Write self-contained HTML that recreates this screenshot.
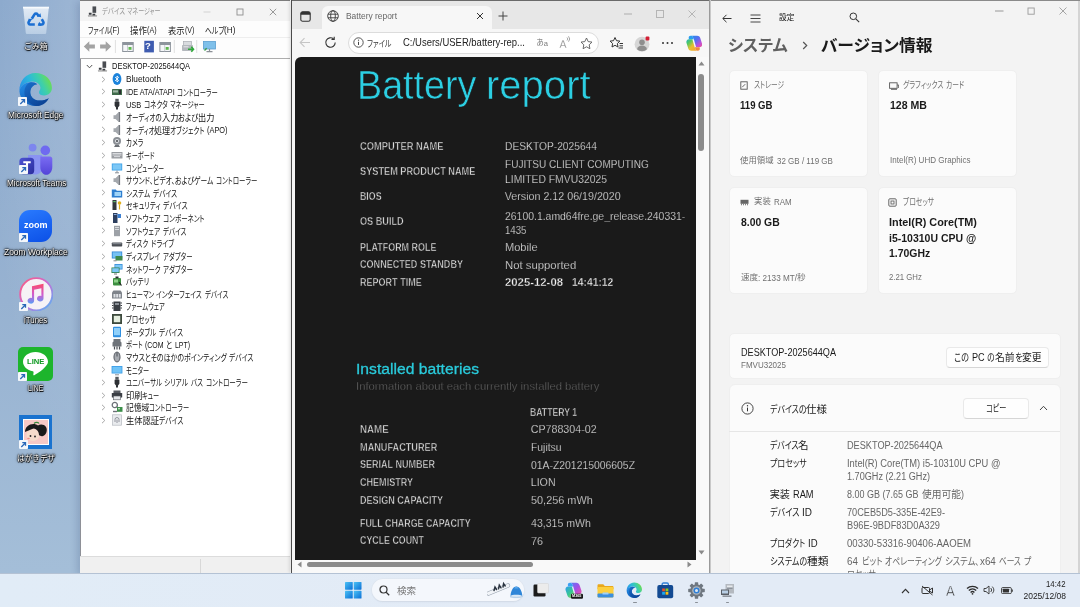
<!DOCTYPE html>
<html lang="ja">
<head>
<meta charset="utf-8">
<title>Desktop</title>
<style>
*{box-sizing:border-box;margin:0;padding:0}
html,body{width:1080px;height:607px;overflow:hidden;background:#9ab3d2}
body{font-family:"Liberation Sans","Noto Sans CJK JP",sans-serif;position:relative}
#desk{position:absolute;left:0;top:0;width:1080px;height:607px;overflow:hidden;will-change:transform;
 background:radial-gradient(ellipse 100px 480px at 85px 0,rgba(255,255,255,.17),rgba(255,255,255,0)),linear-gradient(180deg,#8aa8cc 0,#97b2d1 300px,#a4bed8 570px,#a4bed8 100%)}
.t{position:absolute;white-space:nowrap;display:block}
.a{position:absolute;display:block}
i.a{font-style:normal}

.dl{text-shadow:.6px .8px .7px #000,0 0 1px #000,0 0 1.500px #000,0 0 2.500px #000,0 0 3.500px rgba(0,0,0,.6)}

#dm{position:absolute;left:80px;top:0;width:211px;height:573px;background:#fff;box-shadow:inset 1px 0 0 #8e9097,-3px 2px 7px rgba(20,40,80,.16)}
#dm .dmtitle{position:absolute;left:0;top:0;width:210px;height:20.500px;background:#f4f4f4;box-shadow:inset 0 1px 0 #7c7c7c}
#dm .dmmenu{position:absolute;left:0;top:20.500px;width:210px;height:17px;background:#fdfdfd}
#dm .dmtool{position:absolute;left:0;top:37px;width:210px;height:22px;background:#fdfdfd;border-top:1px solid #eeeeee;border-bottom:1.500px solid #adadad}
#dm .dmtree{position:absolute;left:0;top:0;width:210px;height:560px}
#dm .dmstatus{position:absolute;left:0;top:555.500px;width:210px;height:18px;background:#f0f0f0;border-top:1px solid #dcdcdc}
#dm .dmstatus i{position:absolute;left:120px;top:2px;width:1px;height:14px;background:#d8d8d8}

#edge{position:absolute;left:291px;top:0;width:419px;height:573px;background:#f7f7f7;box-shadow:-1px 0 4px rgba(0,0,0,.16)}
#edge .eborder{position:absolute;left:0;top:0;width:419px;height:573px;box-shadow:inset 1px 0 0 #4c4c4c,inset -1px 0 0 #9a9a9a,inset 0 1px 0 #6a6a6a;pointer-events:none}
#edge .etabs{position:absolute;left:0;top:0;width:419px;height:29px;background:#e7e7e7}
#edge .etab{position:absolute;left:30.600px;top:5.500px;width:170px;height:23.500px;background:#f7f7f7;border-radius:6px 6px 0 0}
#edge .ebar{position:absolute;left:0;top:28.500px;width:419px;height:28.500px;background:#f7f7f7}
#edge .epill{position:absolute;left:57px;top:3.500px;width:250.500px;height:21.500px;border-radius:11px;background:#fff;border:1px solid #dcdcdc}
#edge .epage{position:absolute;left:4px;top:57px;width:401px;height:503px;background:#1a1a1a;border-radius:6px 0 0 0;overflow:hidden}
#edge .evs{position:absolute;left:405px;top:57px;width:13px;height:503px;background:#f9f9f9}
#edge .ehs{position:absolute;left:4px;top:560px;width:414px;height:13px;background:#f9f9f9}

#set{position:absolute;left:710px;top:0;width:370px;height:573px;background:#f3f3f3;overflow:hidden}
#set .sborder{position:absolute;left:0;top:0;width:370px;height:573px;box-shadow:inset 1px 0 0 #c9c9c9,inset 0 1px 0 #8a8a8a,inset -2px 0 0 #d4d4d4;pointer-events:none}
#set .card{position:absolute;background:#fbfbfb;border:1px solid #efefef;border-radius:5px}
#set .btn{position:absolute;background:#fefefe;border:1px solid #e9e9e9;border-bottom-color:#d6d6d6;border-radius:4px}

#tb{position:absolute;left:0;top:573px;width:1080px;height:34px;background:linear-gradient(90deg,#e1ecf7,#e3ebf6 50%,#e3ebf6);box-shadow:inset 0 1px 0 #b4c2d4}
#tb .pill{position:absolute;left:371.600px;top:5.700px;width:152.800px;height:22.800px;border-radius:11.400px;background:#f4f7fc;box-shadow:0 0 0 .6px #dfe5ee,0 .8px 1.200px rgba(120,135,160,.35)}
</style>
</head>
<body>
<div id="desk">
<svg class="a" style="left:21.500px;top:5.800px" width="28" height="29" viewBox="0 0 28 29"><defs><linearGradient id="rb" x1="0" y1="0" x2="0" y2="1"><stop offset="0" stop-color="#e9f0f8"/><stop offset=".5" stop-color="#d3e1f0"/><stop offset="1" stop-color="#bcd0e6"/></linearGradient></defs><path d="M1.200 1.500h25.600l-2.600 25.500c-.1.600-.5 1-1.100 1H4.900c-.6 0-1-.4-1.100-1z" fill="url(#rb)" opacity=".92"/><path d="M1 1.600h26" stroke="#f7fafd" stroke-width="1.800"/><g fill="none" stroke="#1b6fd2" stroke-width="2.600" stroke-linejoin="round"><path d="M9.800 12.800l2.700-4.400c.7-1.100 2.300-1.100 3 0l1.200 2"/><path d="M19.800 13.200l1.500 2.600c.7 1.200-.2 2.700-1.600 2.700h-3.200"/><path d="M12.800 18.500H8.300c-1.400 0-2.300-1.500-1.600-2.700l1-1.700"/></g><g fill="#1b6fd2"><path d="M15.200 10.600l4 .6-.8-4z"/><path d="M17.300 15.800l-1.600 3.700 3.900.5z"/><path d="M10.300 13l-4-.3 1.200 3.800z"/></g></svg>
<span class="t dl" id="t1" style="top:38.80px;font-size:8.4px;line-height:14px;color:#fff;left:23.95px;transform:scaleX(0.9353);transform-origin:0 50%">ごみ箱</span>
<svg class="a" style="left:18.4px;top:71.7px" width="35.0" height="35.0" viewBox="0 0 32 32"><defs><linearGradient id="eadk" x1="0" y1=".7" x2="1" y2=".35"><stop offset="0" stop-color="#2a8ee8"/><stop offset=".4" stop-color="#2cb8dc"/><stop offset=".7" stop-color="#3fd0a8"/><stop offset="1" stop-color="#72de48"/></linearGradient><linearGradient id="ebdk" x1="0" y1="0" x2=".6" y2="1"><stop offset="0" stop-color="#2590e8"/><stop offset="1" stop-color="#0f58b4"/></linearGradient><linearGradient id="ecdk" x1="0" y1="0" x2=".8" y2="1"><stop offset="0" stop-color="#1a6cc8"/><stop offset="1" stop-color="#0a3f90"/></linearGradient></defs><path d="M1.300 17.500C.8 8.500 7.500 1 16 1c8.500 0 15 6 15 13.500 0 4.200-3 7-7 7-2.800 0-4.800-1.200-4.800-2.800 0-1.500 1.300-2 1.300-4.200 0-3-3-5.800-7.200-5.800C7.800 8.700 2.500 12 1.300 17.500z" fill="url(#eadk)"/><path d="M1.300 17.500C2.200 12 7 9.300 12 9.300c2.500 0 4.500.8 5.500 1.900-3.500.3-6.300 3.300-6.300 7.300 0 4.300 3.600 7.600 8.600 7.600 3.200 0 6-.9 8.300-2.200C25.800 28 21.200 31 16 31 8 31 1.800 25 1.300 17.500z" fill="url(#ebdk)"/><path d="M9.800 10c-2.600 2-4 5-4 8.300 0 6 4.200 11.500 10.700 12.700 5 .2 9.500-2.700 11.600-7.100-2.300 1.300-5.100 2.200-8.300 2.200-5 0-8.600-3.300-8.600-7.600 0-4 2.800-7 6.300-7.300-1-1.100-3-1.900-5.500-1.900-.8 0-1.500.2-2.200.7z" fill="url(#ecdk)" opacity=".92"/></svg>
<svg class="a" style="left:18.2px;top:97.3px" width="9" height="9" viewBox="0 0 9 9"><rect width="9" height="9" rx=".8" fill="#f4f7fb"/><path d="M2.300 7l3.700-3.700M3.300 2.600h3.200v3.200" fill="none" stroke="#2a68b8" stroke-width="1.300"/></svg>
<span class="t dl" id="t2" style="top:107.50px;font-size:8.4px;line-height:14px;color:#fff;left:8.10px;transform:scaleX(0.9918);transform-origin:0 50%">Microsoft Edge</span>
<svg class="a" style="left:18.500px;top:142.500px" width="34" height="32" viewBox="0 0 34 32"><defs><linearGradient id="tm" x1="0" y1="0" x2="0" y2="1"><stop offset="0" stop-color="#7a6cf2"/><stop offset="1" stop-color="#5344d8"/></linearGradient><linearGradient id="tm2" x1="0" y1="0" x2="1" y2="1"><stop offset="0" stop-color="#4c54d4"/><stop offset="1" stop-color="#2a2c9c"/></linearGradient></defs><circle cx="13.600" cy="4.600" r="3.900" fill="#7d86ee"/><circle cx="26.300" cy="7.400" r="4.800" fill="#6f6af0"/><path d="M9 12h14v13c0 3.800-3 6.600-7 6.600S9 28.800 9 25z" fill="#8a93f2"/><path d="M21.300 13.500h9.700c1.300 0 2.300 1 2.300 2.300v8.200c0 4.400-2.700 7.800-6 7.800s-6-3.400-6-7.800z" fill="url(#tm)"/><rect x=".4" y="14.800" width="14.800" height="16.400" rx="3.600" fill="url(#tm2)"/><path d="M4.300 19.300h7.400M8 19.300v8.400" stroke="#fff" stroke-width="2.100"/></svg>
<svg class="a" style="left:18.8px;top:165.3px" width="9" height="9" viewBox="0 0 9 9"><rect width="9" height="9" rx=".8" fill="#f4f7fb"/><path d="M2.300 7l3.700-3.700M3.300 2.600h3.200v3.200" fill="none" stroke="#2a68b8" stroke-width="1.300"/></svg>
<span class="t dl" id="t3" style="top:175.50px;font-size:8.4px;line-height:14px;color:#fff;left:6.95px;transform:scaleX(0.9751);transform-origin:0 50%">Microsoft Teams</span>
<div class="a" style="left:18.800px;top:210.200px;width:33.600px;height:32.100px;border-radius:11px;background:linear-gradient(160deg,#2a7bff,#0b4fe6)"></div>
<span class="t" id="t4" style="top:217.60px;font-size:9.6px;line-height:14px;color:#fff;font-weight:bold;left:23.70px;transform:scaleX(0.9416);transform-origin:0 50%">zoom</span>
<svg class="a" style="left:18.8px;top:233.3px" width="9" height="9" viewBox="0 0 9 9"><rect width="9" height="9" rx=".8" fill="#f4f7fb"/><path d="M2.300 7l3.700-3.700M3.300 2.600h3.200v3.200" fill="none" stroke="#2a68b8" stroke-width="1.300"/></svg>
<span class="t dl" id="t5" style="top:245.00px;font-size:8.4px;line-height:14px;color:#fff;left:4.35px;transform:scaleX(1.0086);transform-origin:0 50%">Zoom Workplace</span>
<svg class="a" style="left:18.500px;top:276.800px" width="34.600" height="34.600" viewBox="0 0 36 36"><defs><linearGradient id="it" x1="0" y1="0" x2="1" y2="1"><stop offset="0" stop-color="#ff5a7a"/><stop offset=".5" stop-color="#c86dd7"/><stop offset="1" stop-color="#4fb8f5"/></linearGradient><linearGradient id="it2" x1="0" y1="0" x2="0" y2="1"><stop offset="0" stop-color="#fb4a6a"/><stop offset=".55" stop-color="#d05ccf"/><stop offset="1" stop-color="#5a9cf5"/></linearGradient></defs><circle cx="18" cy="18" r="16.800" fill="#f6f2f6" stroke="url(#it)" stroke-width="2"/><path d="M13.500 9.500l12-2.600v15.600a3.400 3 0 11-2.200-2.800V11.600l-7.600 1.700v11.400a3.400 3 0 11-2.200-2.800z" fill="url(#it2)"/></svg>
<svg class="a" style="left:18.9px;top:302.0px" width="9" height="9" viewBox="0 0 9 9"><rect width="9" height="9" rx=".8" fill="#f4f7fb"/><path d="M2.300 7l3.700-3.700M3.300 2.600h3.200v3.200" fill="none" stroke="#2a68b8" stroke-width="1.300"/></svg>
<span class="t dl" id="t6" style="top:312.50px;font-size:8.4px;line-height:14px;color:#fff;left:24.05px;transform:scaleX(0.9385);transform-origin:0 50%">iTunes</span>
<div class="a" style="left:18.400px;top:346.800px;width:34.500px;height:33.800px;border-radius:5px;background:#1db52c"></div>
<svg class="a" style="left:22px;top:351px" width="27" height="26" viewBox="0 0 27 26"><path d="M13.500 1C6.600 1 1 5.300 1 10.800c0 4.700 4.200 8.600 9.800 9.500.9.200.8.900.7 1.700l-.2 1.700c0 .5.300.9 1 .5 1.500-.8 7.500-4.400 10.300-7.700 2-2 3.400-3.700 3.400-5.700C26 5.300 20.400 1 13.500 1z" fill="#fff"/></svg>
<span class="t" id="t7" style="top:354.80px;font-size:7.2px;line-height:14px;color:#0f9a22;font-weight:bold;left:27.00px;transform:scaleX(1.0626);transform-origin:0 50%">LINE</span>
<svg class="a" style="left:18.4px;top:371.6px" width="9" height="9" viewBox="0 0 9 9"><rect width="9" height="9" rx=".8" fill="#f4f7fb"/><path d="M2.300 7l3.700-3.700M3.300 2.600h3.200v3.200" fill="none" stroke="#2a68b8" stroke-width="1.300"/></svg>
<span class="t dl" id="t8" style="top:381.00px;font-size:8.4px;line-height:14px;color:#fff;left:27.75px;transform:scaleX(0.8322);transform-origin:0 50%">LINE</span>
<div class="a" style="left:18.800px;top:414.900px;width:33.500px;height:34.100px;background:#1a73cf"></div>
<div class="a" style="left:22.500px;top:418.500px;width:26px;height:26.500px;background:#fff"></div>
<svg class="a" style="left:23.500px;top:420px" width="24" height="24" viewBox="0 0 24 24"><rect width="24" height="24" fill="#f7c9c6"/><ellipse cx="9" cy="15" rx="6.500" ry="6" fill="#f6dccb"/><path d="M1 12c0-5 4-8 8.500-8 2 0 3 .5 4.500 1.500 2-1.500 6-1.500 8 1.500 2 3.500 0 8-3 9-1.500.5-3 0-4-1 0-3-2-6-5.500-6.500C6 10 3 11 1 12z" fill="#1a1a1a"/><circle cx="6.500" cy="16" r=".9" fill="#222"/><circle cx="11" cy="16.500" r=".9" fill="#222"/><ellipse cx="4.500" cy="18.500" rx="1.300" ry=".8" fill="#f08a8a"/><path d="M10 3.500c1.500-1.500 4-1.500 5 0" stroke="#3a8a3a" stroke-width="1.200" fill="none"/></svg>
<svg class="a" style="left:18.8px;top:440.0px" width="9" height="9" viewBox="0 0 9 9"><rect width="9" height="9" rx=".8" fill="#f4f7fb"/><path d="M2.300 7l3.700-3.700M3.300 2.600h3.200v3.200" fill="none" stroke="#2a68b8" stroke-width="1.300"/></svg>
<span class="t dl" id="t9" style="top:450.70px;font-size:8.4px;line-height:14px;color:#fff;left:16.50px;transform:scaleX(0.9122);transform-origin:0 50%">はがきデザ</span>
<div id="dm">
<div class="dmtitle">
<svg class="a" style="left:7.0px;top:5.00px" width="11" height="12" viewBox="0 0 12 12"><path d="M6 1h4v7H6z" fill="#4a4d52"/><path d="M2 8h3v2H2zM6 9h3v2H6z" fill="#3a3d42"/><path d="M1 11h10v.8H1z" fill="#555"/></svg>
<span class="t" id="t10" style="top:4.60px;font-size:8px;line-height:14px;color:#959595;left:21.90px;transform:scaleX(0.7911);transform-origin:0 50%;font-feature-settings:'palt'">デバイス</span><span class="t" id="t11" style="top:4.60px;font-size:8px;line-height:14px;color:#959595;left:47.43px;transform:scaleX(0.7538);transform-origin:0 50%;font-feature-settings:'palt'">マネージャー</span>
<svg class="a" style="left:122px;top:6.500px" width="10" height="10" viewBox="0 0 10 10"><path d="M1.500 5h7" stroke="#d2d2d2" stroke-width="1"/></svg>
<svg class="a" style="left:155px;top:6.500px" width="10" height="10" viewBox="0 0 10 10"><rect x="2" y="2" width="6" height="6" fill="none" stroke="#8e8e8e" stroke-width=".9"/></svg>
<svg class="a" style="left:188.400px;top:6.500px" width="10" height="10" viewBox="0 0 10 10"><path d="M1.800 1.800l6.400 6.400M8.200 1.800l-6.400 6.400" stroke="#8e8e8e" stroke-width=".9"/></svg>
</div>
<div class="dmmenu">
<span class="t" id="t12" style="top:3.60px;font-size:9px;line-height:14px;color:#1a1a1a;left:7.50px;transform:scaleX(0.7243);transform-origin:0 50%;font-feature-settings:'palt'">ファイル</span><span class="t" id="t13" style="top:2.80px;font-size:8.5px;line-height:14px;color:#1a1a1a;left:30.08px;transform:scaleX(0.8678);transform-origin:0 50%">(F)</span>
<span class="t" id="t14" style="top:3.60px;font-size:9px;line-height:14px;color:#1a1a1a;left:50.00px;transform:scaleX(0.9390);transform-origin:0 50%;font-feature-settings:'palt'">操作</span><span class="t" id="t15" style="top:2.80px;font-size:8.5px;line-height:14px;color:#1a1a1a;left:66.92px;transform:scaleX(0.8448);transform-origin:0 50%">(A)</span>
<span class="t" id="t16" style="top:3.60px;font-size:9px;line-height:14px;color:#1a1a1a;left:88.00px;transform:scaleX(0.9213);transform-origin:0 50%;font-feature-settings:'palt'">表示</span><span class="t" id="t17" style="top:2.80px;font-size:8.5px;line-height:14px;color:#1a1a1a;left:104.60px;transform:scaleX(0.8289);transform-origin:0 50%">(V)</span>
<span class="t" id="t18" style="top:3.60px;font-size:9px;line-height:14px;color:#1a1a1a;left:124.50px;transform:scaleX(0.7604);transform-origin:0 50%;font-feature-settings:'palt'">ヘルプ</span><span class="t" id="t19" style="top:2.80px;font-size:8.5px;line-height:14px;color:#1a1a1a;left:144.14px;transform:scaleX(0.9617);transform-origin:0 50%">(H)</span>
</div>
<div class="dmtool">
<svg class="a" style="left:2px;top:1.900px" width="200" height="13" viewBox="0 0 200 13"><path d="M1.800 6.500l5.500-5.200v3.200h5.600v4h-5.600v3.200z" fill="#a3a3a3"/><path d="M29.200 6.500l-5.500-5.200v3.200h-5.600v4h5.600v3.200z" fill="#a3a3a3"/><path d="M33.400 0v13" stroke="#e0e0e0" stroke-width="1"/><rect x="40.700" y="2.500" width="10.500" height="9" fill="#f4f6f8" stroke="#8d949c" stroke-width="1"/><rect x="40.700" y="2.500" width="10.500" height="2.500" fill="#8d949c"/><path d="M45.500 5v6.500" stroke="#b4b9bf" stroke-width=".7"/><rect x="46.500" y="7" width="3" height="2.800" fill="#5fb84e"/><rect x="62.300" y=".8" width="9.600" height="11.600" fill="#3f5cb0"/><rect x="77.900" y="2.500" width="10.500" height="9" fill="#f4f6f8" stroke="#8d949c" stroke-width="1"/><rect x="77.900" y="2.500" width="10.500" height="2.500" fill="#8d949c"/><path d="M82.700 5v6.500" stroke="#b4b9bf" stroke-width=".7"/><rect x="83.700" y="7" width="3" height="2.800" fill="#5fb84e"/><path d="M92.300 0v13" stroke="#e0e0e0" stroke-width="1"/><rect x="101.500" y="1.500" width="8" height="5" fill="#d9dcdf" stroke="#a9adb2" stroke-width=".7"/><rect x="100" y="5" width="11" height="6" rx=".8" fill="#b4b8bd"/><rect x="101.500" y="6.300" width="5" height="1" fill="#e6e8ea"/><path d="M106 9.300h5.300M109.300 6.800l2.200 2.500-2.200 2.500" stroke="#2fa83a" stroke-width="1.600" fill="none"/><path d="M114.700 0v13" stroke="#e0e0e0" stroke-width="1"/><rect x="121.500" y="1.500" width="12" height="7.500" fill="#7fc0ea" stroke="#5d9fd0" stroke-width=".8"/><path d="M124.500 11.700h6M127.500 9v2.700" stroke="#8b9096" stroke-width="1.200"/><path d="M122.500 10.500l2.200-2.200" stroke="#3c9e4a" stroke-width="1.400"/></svg>
<span class="t" id="t20" style="top:1.40px;font-size:9.5px;line-height:14px;color:#fff;font-weight:bold;left:64.90px">?</span>
</div>
<div class="dmtree">
<svg class="a" style="left:5.5px;top:64.40px" width="7" height="5" viewBox="0 0 7 5"><path d="M.8 1L3.500 3.800 6.200 1" fill="none" stroke="#555" stroke-width="1"/></svg>
<svg class="a" style="left:17.0px;top:59.80px" width="11" height="12" viewBox="0 0 12 12"><path d="M6 1h4v7H6z" fill="#4a4d52"/><path d="M2 8h3v2H2zM6 9h3v2H6z" fill="#3a3d42"/><path d="M1 11h10v.8H1z" fill="#555"/></svg>
<span class="t" id="t21" style="top:59.30px;font-size:8.6px;line-height:14px;color:#111;left:32.20px;transform:scaleX(0.8700);transform-origin:0 50%">DESKTOP-2025644QA</span>
<svg class="a" style="left:21.0px;top:75.80px" width="5" height="7" viewBox="0 0 5 7"><path d="M1 .8L3.800 3.500 1 6.200" fill="none" stroke="#a6a6a6" stroke-width="1"/></svg>
<svg class="a" style="left:30.6px;top:73.10px" width="12" height="12" viewBox="0 0 12 12"><ellipse cx="6" cy="6" rx="4.400" ry="5.900" fill="#1c83dc"/><path d="M4.2 4l3.4 3.6L6 9V3l1.6 1.4L4.2 8" stroke="#fff" stroke-width=".9" fill="none"/></svg>
<span class="t" id="t22" style="top:72.40px;font-size:8.5px;line-height:14px;color:#111;left:45.80px;transform:scaleX(0.9743);transform-origin:0 50%">Bluetooth</span>
<svg class="a" style="left:21.0px;top:88.43px" width="5" height="7" viewBox="0 0 5 7"><path d="M1 .8L3.800 3.500 1 6.200" fill="none" stroke="#a6a6a6" stroke-width="1"/></svg>
<svg class="a" style="left:30.6px;top:85.73px" width="12" height="12" viewBox="0 0 12 12"><rect x="1" y="3" width="10" height="6" rx=".6" fill="#3f6a4a"/><rect x="2" y="4.3" width="5" height="2.2" fill="#9fb6a4"/><rect x="8" y="4" width="2" height="4" fill="#2a2d2f"/></svg>
<span class="t" id="t23" style="top:85.03px;font-size:8.5px;line-height:14px;color:#111;left:45.80px;transform:scaleX(0.8550);transform-origin:0 50%">IDE ATA/ATAPI</span><span class="t" id="t24" style="top:85.73px;font-size:9px;line-height:14px;color:#111;left:97.10px;transform:scaleX(0.7046);transform-origin:0 50%;font-feature-settings:'palt'">コントローラー</span>
<svg class="a" style="left:21.0px;top:101.06px" width="5" height="7" viewBox="0 0 5 7"><path d="M1 .8L3.800 3.500 1 6.200" fill="none" stroke="#a6a6a6" stroke-width="1"/></svg>
<svg class="a" style="left:30.6px;top:98.36px" width="12" height="12" viewBox="0 0 12 12"><path d="M4.3 .8h3.4v3H4.300z" fill="#55595e"/><path d="M3.6 3.8h4.8v4L7 9.6v2H5v-2L3.600 7.800z" fill="#2e3135"/></svg>
<span class="t" id="t25" style="top:97.66px;font-size:8.5px;line-height:14px;color:#111;left:45.80px;transform:scaleX(0.8748);transform-origin:0 50%">USB</span><span class="t" id="t26" style="top:98.36px;font-size:9px;line-height:14px;color:#111;left:63.72px;transform:scaleX(0.7261);transform-origin:0 50%;font-feature-settings:'palt'">コネクタ</span><span class="t" id="t27" style="top:98.36px;font-size:9px;line-height:14px;color:#111;left:90.15px;transform:scaleX(0.6937);transform-origin:0 50%;font-feature-settings:'palt'">マネージャー</span>
<svg class="a" style="left:21.0px;top:113.69px" width="5" height="7" viewBox="0 0 5 7"><path d="M1 .8L3.800 3.500 1 6.200" fill="none" stroke="#a6a6a6" stroke-width="1"/></svg>
<svg class="a" style="left:30.6px;top:110.99px" width="12" height="12" viewBox="0 0 12 12"><path d="M2.500 4.200h2L7.500 1.200v9.600L4.500 8h-2z" fill="#a4a8ad"/><rect x="7.500" y="1" width="1.600" height="10" fill="#74787e"/></svg>
<span class="t" id="t28" style="top:110.99px;font-size:9px;line-height:14px;color:#111;left:45.80px;transform:scaleX(0.7315);transform-origin:0 50%;font-feature-settings:'palt'">オーディオの</span><span class="t" id="t29" style="top:110.99px;font-size:9px;line-height:14px;color:#111;left:81.55px;transform:scaleX(0.9039);transform-origin:0 50%;font-feature-settings:'palt'">入力</span><span class="t" id="t30" style="top:110.99px;font-size:9px;line-height:14px;color:#111;left:97.84px;transform:scaleX(0.8011);transform-origin:0 50%;font-feature-settings:'palt'">および</span><span class="t" id="t31" style="top:110.99px;font-size:9px;line-height:14px;color:#111;left:118.02px;transform:scaleX(0.9039);transform-origin:0 50%;font-feature-settings:'palt'">出力</span>
<svg class="a" style="left:21.0px;top:126.32px" width="5" height="7" viewBox="0 0 5 7"><path d="M1 .8L3.800 3.500 1 6.200" fill="none" stroke="#a6a6a6" stroke-width="1"/></svg>
<svg class="a" style="left:30.6px;top:123.62px" width="12" height="12" viewBox="0 0 12 12"><path d="M2.500 4.200h2L7.500 1.200v9.600L4.500 8h-2z" fill="#a4a8ad"/><rect x="7.500" y="1" width="1.600" height="10" fill="#74787e"/></svg>
<span class="t" id="t32" style="top:123.62px;font-size:9px;line-height:14px;color:#111;left:45.80px;transform:scaleX(0.7090);transform-origin:0 50%;font-feature-settings:'palt'">オーディオ</span><span class="t" id="t33" style="top:123.62px;font-size:9px;line-height:14px;color:#111;left:74.29px;transform:scaleX(0.8873);transform-origin:0 50%;font-feature-settings:'palt'">処理</span><span class="t" id="t34" style="top:123.62px;font-size:9px;line-height:14px;color:#111;left:90.28px;transform:scaleX(0.7262);transform-origin:0 50%;font-feature-settings:'palt'">オブジェクト</span><span class="t" id="t35" style="top:122.92px;font-size:8.5px;line-height:14px;color:#111;left:127.29px;transform:scaleX(0.8682);transform-origin:0 50%">(APO)</span>
<svg class="a" style="left:21.0px;top:138.95px" width="5" height="7" viewBox="0 0 5 7"><path d="M1 .8L3.800 3.500 1 6.200" fill="none" stroke="#a6a6a6" stroke-width="1"/></svg>
<svg class="a" style="left:30.6px;top:136.25px" width="12" height="12" viewBox="0 0 12 12"><circle cx="6" cy="5" r="4" fill="#8b8f95"/><circle cx="6" cy="5" r="2" fill="#dfe2e6"/><circle cx="6" cy="5" r="1" fill="#44474c"/><path d="M3 11h6l-1.200-2H4.200z" fill="#6c7076"/></svg>
<span class="t" id="t36" style="top:136.25px;font-size:9px;line-height:14px;color:#111;left:45.80px;transform:scaleX(0.7208);transform-origin:0 50%;font-feature-settings:'palt'">カメラ</span>
<svg class="a" style="left:21.0px;top:151.58px" width="5" height="7" viewBox="0 0 5 7"><path d="M1 .8L3.800 3.500 1 6.200" fill="none" stroke="#a6a6a6" stroke-width="1"/></svg>
<svg class="a" style="left:30.6px;top:148.88px" width="12" height="12" viewBox="0 0 12 12"><rect x=".5" y="3" width="11" height="6.500" rx=".6" fill="#9a9da2"/><path d="M1.5 4.5h9M1.5 6h9M3 7.600h6" stroke="#e9eaec" stroke-width=".8"/></svg>
<span class="t" id="t37" style="top:148.88px;font-size:9px;line-height:14px;color:#111;left:45.80px;transform:scaleX(0.6836);transform-origin:0 50%;font-feature-settings:'palt'">キーボード</span>
<svg class="a" style="left:21.0px;top:164.21px" width="5" height="7" viewBox="0 0 5 7"><path d="M1 .8L3.800 3.500 1 6.200" fill="none" stroke="#a6a6a6" stroke-width="1"/></svg>
<svg class="a" style="left:30.6px;top:161.51px" width="12" height="12" viewBox="0 0 12 12"><rect x=".8" y="1.500" width="10.400" height="7" fill="#3aa0e8"/><rect x="1.600" y="2.300" width="8.800" height="5.400" fill="#7cc7f6"/><path d="M4 10.800h4M6 8.500v2.300" stroke="#8a9097" stroke-width="1"/></svg>
<span class="t" id="t38" style="top:161.51px;font-size:9px;line-height:14px;color:#111;left:45.80px;transform:scaleX(0.6538);transform-origin:0 50%;font-feature-settings:'palt'">コンピューター</span>
<svg class="a" style="left:21.0px;top:176.84px" width="5" height="7" viewBox="0 0 5 7"><path d="M1 .8L3.800 3.500 1 6.200" fill="none" stroke="#a6a6a6" stroke-width="1"/></svg>
<svg class="a" style="left:30.6px;top:174.14px" width="12" height="12" viewBox="0 0 12 12"><path d="M2.500 4.200h2L7.500 1.200v9.600L4.500 8h-2z" fill="#a4a8ad"/><rect x="7.500" y="1" width="1.600" height="10" fill="#74787e"/></svg>
<span class="t" id="t39" style="top:174.14px;font-size:9px;line-height:14px;color:#111;left:45.80px;transform:scaleX(0.7560);transform-origin:0 50%;font-feature-settings:'palt'">サウンド、ビデオ、およびゲーム</span><span class="t" id="t40" style="top:174.14px;font-size:9px;line-height:14px;color:#111;left:135.89px;transform:scaleX(0.7152);transform-origin:0 50%;font-feature-settings:'palt'">コントローラー</span>
<svg class="a" style="left:21.0px;top:189.47px" width="5" height="7" viewBox="0 0 5 7"><path d="M1 .8L3.800 3.500 1 6.200" fill="none" stroke="#a6a6a6" stroke-width="1"/></svg>
<svg class="a" style="left:30.6px;top:186.77px" width="12" height="12" viewBox="0 0 12 12"><path d="M.8 2.500h4l1 1.200h5.400v6.800H.8z" fill="#2f7fd0"/><rect x="3.500" y="5" width="6.500" height="4" fill="#9fd3f7"/></svg>
<span class="t" id="t41" style="top:186.77px;font-size:9px;line-height:14px;color:#111;left:45.80px;transform:scaleX(0.7347);transform-origin:0 50%;font-feature-settings:'palt'">システム</span><span class="t" id="t42" style="top:186.77px;font-size:9px;line-height:14px;color:#111;left:72.53px;transform:scaleX(0.7364);transform-origin:0 50%;font-feature-settings:'palt'">デバイス</span>
<svg class="a" style="left:21.0px;top:202.10px" width="5" height="7" viewBox="0 0 5 7"><path d="M1 .8L3.800 3.500 1 6.200" fill="none" stroke="#a6a6a6" stroke-width="1"/></svg>
<svg class="a" style="left:30.6px;top:199.40px" width="12" height="12" viewBox="0 0 12 12"><rect x="1.500" y="1" width="4" height="10" fill="#33373c"/><rect x="2.300" y="2" width="2.400" height="1.200" fill="#5fbf6a"/><circle cx="8.500" cy="4" r="1.800" fill="#e0b020"/><path d="M8.500 5.500v5" stroke="#e0b020" stroke-width="1.200"/></svg>
<span class="t" id="t43" style="top:199.40px;font-size:9px;line-height:14px;color:#111;left:45.80px;transform:scaleX(0.7454);transform-origin:0 50%;font-feature-settings:'palt'">セキュリティ</span><span class="t" id="t44" style="top:199.40px;font-size:9px;line-height:14px;color:#111;left:83.22px;transform:scaleX(0.7521);transform-origin:0 50%;font-feature-settings:'palt'">デバイス</span>
<svg class="a" style="left:21.0px;top:214.73px" width="5" height="7" viewBox="0 0 5 7"><path d="M1 .8L3.800 3.500 1 6.200" fill="none" stroke="#a6a6a6" stroke-width="1"/></svg>
<svg class="a" style="left:30.6px;top:212.03px" width="12" height="12" viewBox="0 0 12 12"><rect x="2" y="1" width="4.500" height="10" fill="#2d3e5e"/><rect x="6.500" y="2" width="3.500" height="4" fill="#3d7fd0"/><rect x="2.800" y="2" width="2.800" height="1" fill="#8fb0e0"/></svg>
<span class="t" id="t45" style="top:212.03px;font-size:9px;line-height:14px;color:#111;left:45.80px;transform:scaleX(0.7562);transform-origin:0 50%;font-feature-settings:'palt'">ソフトウェア</span><span class="t" id="t46" style="top:212.03px;font-size:9px;line-height:14px;color:#111;left:83.02px;transform:scaleX(0.7214);transform-origin:0 50%;font-feature-settings:'palt'">コンポーネント</span>
<svg class="a" style="left:21.0px;top:227.36px" width="5" height="7" viewBox="0 0 5 7"><path d="M1 .8L3.800 3.500 1 6.200" fill="none" stroke="#a6a6a6" stroke-width="1"/></svg>
<svg class="a" style="left:30.6px;top:224.66px" width="12" height="12" viewBox="0 0 12 12"><rect x="3" y=".8" width="6" height="10.400" fill="#9da1a7"/><rect x="4" y="2" width="4" height="1" fill="#d7dadd"/><rect x="4" y="4" width="4" height="1" fill="#d7dadd"/></svg>
<span class="t" id="t47" style="top:224.66px;font-size:9px;line-height:14px;color:#111;left:45.80px;transform:scaleX(0.7465);transform-origin:0 50%;font-feature-settings:'palt'">ソフトウェア</span><span class="t" id="t48" style="top:224.66px;font-size:9px;line-height:14px;color:#111;left:82.54px;transform:scaleX(0.7177);transform-origin:0 50%;font-feature-settings:'palt'">デバイス</span>
<svg class="a" style="left:21.0px;top:239.99px" width="5" height="7" viewBox="0 0 5 7"><path d="M1 .8L3.800 3.500 1 6.200" fill="none" stroke="#a6a6a6" stroke-width="1"/></svg>
<svg class="a" style="left:30.6px;top:237.29px" width="12" height="12" viewBox="0 0 12 12"><rect x=".8" y="5.500" width="10.400" height="4" rx=".8" fill="#4a4e54"/><rect x="1.500" y="6.200" width="9" height="1" fill="#8d9299"/></svg>
<span class="t" id="t49" style="top:237.29px;font-size:9px;line-height:14px;color:#111;left:45.80px;transform:scaleX(0.7166);transform-origin:0 50%;font-feature-settings:'palt'">ディスク</span><span class="t" id="t50" style="top:237.29px;font-size:9px;line-height:14px;color:#111;left:70.52px;transform:scaleX(0.7543);transform-origin:0 50%;font-feature-settings:'palt'">ドライブ</span>
<svg class="a" style="left:21.0px;top:252.62px" width="5" height="7" viewBox="0 0 5 7"><path d="M1 .8L3.800 3.500 1 6.200" fill="none" stroke="#a6a6a6" stroke-width="1"/></svg>
<svg class="a" style="left:30.6px;top:249.92px" width="12" height="12" viewBox="0 0 12 12"><rect x=".8" y="1.500" width="10.400" height="7" fill="#2f86d6"/><rect x="1.600" y="2.300" width="8.800" height="5.400" fill="#77c2f4"/><rect x="4.500" y="6" width="7" height="4.500" fill="#3f8a4c"/><path d="M2.500 10.800h3" stroke="#888" stroke-width="1"/></svg>
<span class="t" id="t51" style="top:249.92px;font-size:9px;line-height:14px;color:#111;left:45.80px;transform:scaleX(0.7306);transform-origin:0 50%;font-feature-settings:'palt'">ディスプレイ</span><span class="t" id="t52" style="top:249.92px;font-size:9px;line-height:14px;color:#111;left:82.73px;transform:scaleX(0.7081);transform-origin:0 50%;font-feature-settings:'palt'">アダプター</span>
<svg class="a" style="left:21.0px;top:265.25px" width="5" height="7" viewBox="0 0 5 7"><path d="M1 .8L3.800 3.500 1 6.200" fill="none" stroke="#a6a6a6" stroke-width="1"/></svg>
<svg class="a" style="left:30.6px;top:262.55px" width="12" height="12" viewBox="0 0 12 12"><rect x="3.500" y="1" width="8" height="5.500" fill="#2f86d6"/><rect x="4.200" y="1.700" width="6.600" height="4" fill="#7cc7f6"/><rect x=".5" y="4.500" width="8" height="5.500" fill="#2b7a46"/><rect x="1.200" y="5.200" width="6.600" height="4" fill="#7cc7f6"/><path d="M3 11h3" stroke="#777" stroke-width="1"/></svg>
<span class="t" id="t53" style="top:262.55px;font-size:9px;line-height:14px;color:#111;left:45.80px;transform:scaleX(0.7289);transform-origin:0 50%;font-feature-settings:'palt'">ネットワーク</span><span class="t" id="t54" style="top:262.55px;font-size:9px;line-height:14px;color:#111;left:83.12px;transform:scaleX(0.7155);transform-origin:0 50%;font-feature-settings:'palt'">アダプター</span>
<svg class="a" style="left:21.0px;top:277.88px" width="5" height="7" viewBox="0 0 5 7"><path d="M1 .8L3.800 3.500 1 6.200" fill="none" stroke="#a6a6a6" stroke-width="1"/></svg>
<svg class="a" style="left:30.6px;top:275.18px" width="12" height="12" viewBox="0 0 12 12"><rect x="2" y="3" width="8" height="7.500" rx="1" fill="#3c8f3f"/><rect x="3" y="4.500" width="4" height="3" fill="#8fd28a"/><rect x="4.500" y="1.500" width="3" height="1.800" fill="#2b2e31"/><path d="M8 7l2.500 3.500" stroke="#222" stroke-width="1.200"/></svg>
<span class="t" id="t55" style="top:275.18px;font-size:9px;line-height:14px;color:#111;left:45.80px;transform:scaleX(0.7450);transform-origin:0 50%;font-feature-settings:'palt'">バッテリ</span>
<svg class="a" style="left:21.0px;top:290.51px" width="5" height="7" viewBox="0 0 5 7"><path d="M1 .8L3.800 3.500 1 6.200" fill="none" stroke="#a6a6a6" stroke-width="1"/></svg>
<svg class="a" style="left:30.6px;top:287.81px" width="12" height="12" viewBox="0 0 12 12"><path d="M1 4.500l1.500-2h7l1.500 2v6H1z" fill="#7f848b"/><rect x="2.500" y="6" width="2" height="3.500" fill="#dfe2e6"/><rect x="5.200" y="6" width="2" height="3.500" fill="#dfe2e6"/><rect x="7.900" y="6" width="1.800" height="3.500" fill="#dfe2e6"/></svg>
<span class="t" id="t56" style="top:287.81px;font-size:9px;line-height:14px;color:#111;left:45.80px;transform:scaleX(0.6925);transform-origin:0 50%;font-feature-settings:'palt'">ヒューマン</span><span class="t" id="t57" style="top:287.81px;font-size:9px;line-height:14px;color:#111;left:76.49px;transform:scaleX(0.7269);transform-origin:0 50%;font-feature-settings:'palt'">インターフェイス</span><span class="t" id="t58" style="top:287.81px;font-size:9px;line-height:14px;color:#111;left:124.68px;transform:scaleX(0.7134);transform-origin:0 50%;font-feature-settings:'palt'">デバイス</span>
<svg class="a" style="left:21.0px;top:303.14px" width="5" height="7" viewBox="0 0 5 7"><path d="M1 .8L3.800 3.500 1 6.200" fill="none" stroke="#a6a6a6" stroke-width="1"/></svg>
<svg class="a" style="left:30.6px;top:300.44px" width="12" height="12" viewBox="0 0 12 12"><rect x="2.500" y="1.500" width="7" height="9.500" fill="#3a3e44"/><path d="M1 3h1.500M1 5.500h1.500M1 8h1.500M9.500 3H11M9.500 5.500H11M9.500 8H11" stroke="#3a3e44" stroke-width="1"/><rect x="4" y="3" width="4" height="2" fill="#8c9198"/></svg>
<span class="t" id="t59" style="top:300.44px;font-size:9px;line-height:14px;color:#111;left:45.80px;transform:scaleX(0.6946);transform-origin:0 50%;font-feature-settings:'palt'">ファームウェア</span>
<svg class="a" style="left:21.0px;top:315.77px" width="5" height="7" viewBox="0 0 5 7"><path d="M1 .8L3.800 3.500 1 6.200" fill="none" stroke="#a6a6a6" stroke-width="1"/></svg>
<svg class="a" style="left:30.6px;top:313.07px" width="12" height="12" viewBox="0 0 12 12"><rect x="1" y="1" width="10" height="10" fill="#3d4a3d"/><rect x="2.800" y="2.800" width="6.400" height="6.400" fill="#e6efe0"/></svg>
<span class="t" id="t60" style="top:313.07px;font-size:9px;line-height:14px;color:#111;left:45.80px;transform:scaleX(0.7208);transform-origin:0 50%;font-feature-settings:'palt'">プロセッサ</span>
<svg class="a" style="left:21.0px;top:328.40px" width="5" height="7" viewBox="0 0 5 7"><path d="M1 .8L3.800 3.500 1 6.200" fill="none" stroke="#a6a6a6" stroke-width="1"/></svg>
<svg class="a" style="left:30.6px;top:325.70px" width="12" height="12" viewBox="0 0 12 12"><rect x="2" y=".8" width="8" height="10.400" rx="1" fill="#2f8fe0"/><rect x="3" y="2" width="6" height="7.200" fill="#8fd0fa"/></svg>
<span class="t" id="t61" style="top:325.70px;font-size:9px;line-height:14px;color:#111;left:45.80px;transform:scaleX(0.7210);transform-origin:0 50%;font-feature-settings:'palt'">ポータブル</span><span class="t" id="t62" style="top:325.70px;font-size:9px;line-height:14px;color:#111;left:78.54px;transform:scaleX(0.7362);transform-origin:0 50%;font-feature-settings:'palt'">デバイス</span>
<svg class="a" style="left:21.0px;top:341.03px" width="5" height="7" viewBox="0 0 5 7"><path d="M1 .8L3.800 3.500 1 6.200" fill="none" stroke="#a6a6a6" stroke-width="1"/></svg>
<svg class="a" style="left:30.6px;top:338.33px" width="12" height="12" viewBox="0 0 12 12"><path d="M2.500 1h7v2.500l1 1v4h-9v-4l1-1z" fill="#6e7379"/><path d="M3.500 8.500v3M6 8.500v3M8.500 8.500v3" stroke="#4a4e54" stroke-width="1.200"/></svg>
<span class="t" id="t63" style="top:338.33px;font-size:9px;line-height:14px;color:#111;left:45.80px;transform:scaleX(0.6829);transform-origin:0 50%;font-feature-settings:'palt'">ポート</span><span class="t" id="t64" style="top:337.63px;font-size:8.5px;line-height:14px;color:#111;left:64.98px;transform:scaleX(0.8193);transform-origin:0 50%">(COM</span><span class="t" id="t65" style="top:338.33px;font-size:9px;line-height:14px;color:#111;left:86.01px;transform:scaleX(0.7848);transform-origin:0 50%;font-feature-settings:'palt'">と</span><span class="t" id="t66" style="top:337.63px;font-size:8.5px;line-height:14px;color:#111;left:94.70px;transform:scaleX(0.8195);transform-origin:0 50%">LPT)</span>
<svg class="a" style="left:21.0px;top:353.66px" width="5" height="7" viewBox="0 0 5 7"><path d="M1 .8L3.800 3.500 1 6.200" fill="none" stroke="#a6a6a6" stroke-width="1"/></svg>
<svg class="a" style="left:30.6px;top:350.96px" width="12" height="12" viewBox="0 0 12 12"><ellipse cx="6" cy="6" rx="3.600" ry="5.400" fill="#6c7077"/><ellipse cx="6" cy="6" rx="2.300" ry="4.200" fill="#a7abb1"/><path d="M6 1.500v4" stroke="#4c5056" stroke-width="1"/></svg>
<span class="t" id="t67" style="top:350.96px;font-size:9px;line-height:14px;color:#111;left:45.80px;transform:scaleX(0.7735);transform-origin:0 50%;font-feature-settings:'palt'">マウスとそのほかのポインティング</span><span class="t" id="t68" style="top:350.96px;font-size:9px;line-height:14px;color:#111;left:149.38px;transform:scaleX(0.7469);transform-origin:0 50%;font-feature-settings:'palt'">デバイス</span>
<svg class="a" style="left:21.0px;top:366.29px" width="5" height="7" viewBox="0 0 5 7"><path d="M1 .8L3.800 3.500 1 6.200" fill="none" stroke="#a6a6a6" stroke-width="1"/></svg>
<svg class="a" style="left:30.6px;top:363.59px" width="12" height="12" viewBox="0 0 12 12"><rect x=".6" y="2" width="10.800" height="7.500" fill="#3a9be6"/><rect x="1.400" y="2.800" width="9.200" height="5.900" fill="#6fc3f7"/><path d="M4 10.800h4" stroke="#8a9097" stroke-width="1"/></svg>
<span class="t" id="t69" style="top:363.59px;font-size:9px;line-height:14px;color:#111;left:45.80px;transform:scaleX(0.6906);transform-origin:0 50%;font-feature-settings:'palt'">モニター</span>
<svg class="a" style="left:21.0px;top:378.92px" width="5" height="7" viewBox="0 0 5 7"><path d="M1 .8L3.800 3.500 1 6.200" fill="none" stroke="#a6a6a6" stroke-width="1"/></svg>
<svg class="a" style="left:30.6px;top:376.22px" width="12" height="12" viewBox="0 0 12 12"><path d="M4.3 .8h3.4v3H4.300z" fill="#55595e"/><path d="M3.6 3.8h4.8v4L7 9.6v2H5v-2L3.600 7.800z" fill="#2e3135"/></svg>
<span class="t" id="t70" style="top:376.22px;font-size:9px;line-height:14px;color:#111;left:45.80px;transform:scaleX(0.7017);transform-origin:0 50%;font-feature-settings:'palt'">ユニバーサル</span><span class="t" id="t71" style="top:376.22px;font-size:9px;line-height:14px;color:#111;left:84.37px;transform:scaleX(0.7388);transform-origin:0 50%;font-feature-settings:'palt'">シリアル</span><span class="t" id="t72" style="top:376.22px;font-size:9px;line-height:14px;color:#111;left:110.96px;transform:scaleX(0.7211);transform-origin:0 50%;font-feature-settings:'palt'">バス</span><span class="t" id="t73" style="top:376.22px;font-size:9px;line-height:14px;color:#111;left:125.58px;transform:scaleX(0.7256);transform-origin:0 50%;font-feature-settings:'palt'">コントローラー</span>
<svg class="a" style="left:21.0px;top:391.55px" width="5" height="7" viewBox="0 0 5 7"><path d="M1 .8L3.800 3.500 1 6.200" fill="none" stroke="#a6a6a6" stroke-width="1"/></svg>
<svg class="a" style="left:30.6px;top:388.85px" width="12" height="12" viewBox="0 0 12 12"><rect x="2.500" y="1.500" width="7" height="3" fill="#55595f"/><rect x=".8" y="4" width="10.400" height="4.500" rx=".6" fill="#3a3e44"/><rect x="2.500" y="7" width="7" height="3.800" fill="#e4e6e9" stroke="#55595f" stroke-width=".6"/></svg>
<span class="t" id="t74" style="top:388.85px;font-size:9px;line-height:14px;color:#111;left:45.80px;transform:scaleX(0.9154);transform-origin:0 50%;font-feature-settings:'palt'">印刷</span><span class="t" id="t75" style="top:388.85px;font-size:9px;line-height:14px;color:#111;left:62.29px;transform:scaleX(0.6909);transform-origin:0 50%;font-feature-settings:'palt'">キュー</span>
<svg class="a" style="left:21.0px;top:404.18px" width="5" height="7" viewBox="0 0 5 7"><path d="M1 .8L3.800 3.500 1 6.200" fill="none" stroke="#a6a6a6" stroke-width="1"/></svg>
<svg class="a" style="left:30.6px;top:401.48px" width="12" height="12" viewBox="0 0 12 12"><circle cx="3.800" cy="4" r="2.600" fill="none" stroke="#6c7077" stroke-width="1.300"/><path d="M2 10.500h4" stroke="#6c7077" stroke-width="1.400"/><rect x="6" y="6" width="5.500" height="4.800" fill="#3c8f4a"/><rect x="7" y="7" width="2" height="1.400" fill="#b9e0b8"/></svg>
<span class="t" id="t76" style="top:401.48px;font-size:9px;line-height:14px;color:#111;left:45.80px;transform:scaleX(0.8613);transform-origin:0 50%;font-feature-settings:'palt'">記憶域</span><span class="t" id="t77" style="top:401.48px;font-size:9px;line-height:14px;color:#111;left:69.07px;transform:scaleX(0.6947);transform-origin:0 50%;font-feature-settings:'palt'">コントローラー</span>
<svg class="a" style="left:21.0px;top:416.81px" width="5" height="7" viewBox="0 0 5 7"><path d="M1 .8L3.800 3.500 1 6.200" fill="none" stroke="#a6a6a6" stroke-width="1"/></svg>
<svg class="a" style="left:30.6px;top:414.11px" width="12" height="12" viewBox="0 0 12 12"><rect x="1.500" y=".8" width="9" height="10.400" fill="#e9ebee" stroke="#b6bac0" stroke-width=".7"/><path d="M4 8V5.500a2 2 0 014 0V8M6 5.500V9" stroke="#7d828a" stroke-width=".8" fill="none"/></svg>
<span class="t" id="t78" style="top:414.11px;font-size:9px;line-height:14px;color:#111;left:45.80px;transform:scaleX(0.9164);transform-origin:0 50%;font-feature-settings:'palt'">生体認証</span><span class="t" id="t79" style="top:414.11px;font-size:9px;line-height:14px;color:#111;left:78.80px;transform:scaleX(0.7463);transform-origin:0 50%;font-feature-settings:'palt'">デバイス</span>
</div>
<div class="dmstatus"><i></i></div>
</div>
<div id="edge">
<div class="etabs">
<div class="etab"></div>
<svg class="a" style="left:8.800px;top:10.800px" width="11" height="11" viewBox="0 0 11 11"><rect x=".8" y=".8" width="9.400" height="9.400" rx="1.800" fill="none" stroke="#333" stroke-width="1.100"/><path d="M.8 3.800V2.600C.8 1.600 1.600 .8 2.600 .8h5.800c1 0 1.800.8 1.800 1.800v1.200z" fill="#333"/></svg>
<svg class="a" style="left:35.800px;top:10px" width="12" height="12" viewBox="0 0 12 12"><g fill="none" stroke="#3a3a3a" stroke-width=".9"><circle cx="6" cy="6" r="5.300"/><ellipse cx="6" cy="6" rx="2.300" ry="5.300"/><path d="M1 4.200h10M1 7.800h10"/></g></svg>
<span class="t" id="t80" style="top:8.80px;font-size:9px;line-height:14px;color:#666;left:54.60px;transform:scaleX(0.9352);transform-origin:0 50%">Battery report</span>
<svg class="a" style="left:185px;top:12px" width="8" height="8" viewBox="0 0 8 8"><path d="M1 1l6 6M7 1l-6 6" stroke="#333" stroke-width="1"/></svg>
<svg class="a" style="left:207px;top:11px" width="10" height="10" viewBox="0 0 10 10"><path d="M5 .5v9M.5 5h9" stroke="#444" stroke-width="1"/></svg>
<svg class="a" style="left:331.900px;top:9.300px" width="10" height="10" viewBox="0 0 10 10"><path d="M1 5h8" stroke="#adadad" stroke-width="1"/></svg>
<svg class="a" style="left:363.900px;top:9.300px" width="10" height="10" viewBox="0 0 10 10"><rect x="1.500" y="1.500" width="7" height="7" fill="none" stroke="#b5b5b5" stroke-width="1"/></svg>
<svg class="a" style="left:396px;top:9.300px" width="10" height="10" viewBox="0 0 10 10"><path d="M1.500 1.500l7 7M8.500 1.500l-7 7" stroke="#b5b5b5" stroke-width="1"/></svg>
</div>
<div class="ebar">
<svg class="a" style="left:8.300px;top:8.8px" width="12" height="11" viewBox="0 0 12 11"><path d="M11 5.500H1.500M5.500 1.200L1.200 5.500l4.300 4.300" fill="none" stroke="#c6c6c6" stroke-width="1.100"/></svg>
<svg class="a" style="left:33.300px;top:7.8px" width="13" height="13" viewBox="0 0 13 13"><path d="M11.200 6.500a4.700 4.700 0 11-1.600-3.500" fill="none" stroke="#333" stroke-width="1.100"/><path d="M10.200 .8v2.700H7.500" fill="none" stroke="#333" stroke-width="1.100"/></svg>
<div class="epill"></div>
<svg class="a" style="left:62.200px;top:8.8px" width="11" height="11" viewBox="0 0 11 11"><circle cx="5.500" cy="5.500" r="4.700" fill="none" stroke="#444" stroke-width=".9"/><path d="M5.500 4.800v3.200" stroke="#444" stroke-width="1"/><circle cx="5.500" cy="3.200" r=".6" fill="#444"/></svg>
<span class="t" id="t81" style="top:8.10px;font-size:9px;line-height:14px;color:#333;left:76.40px;transform:scaleX(0.7860);transform-origin:0 50%;font-feature-settings:'palt'">ファイル</span>
<span class="t" id="t82" style="top:7.90px;font-size:10.3px;line-height:14px;color:#222;left:111.70px;transform:scaleX(0.9190);transform-origin:0 50%">C:/Users/USER/battery-rep...</span>
<span class="t" id="t83" style="top:7.90px;font-size:7.6px;line-height:14px;color:#7a7a7a;left:245.30px">あ</span>
<span class="t" id="t84" style="top:8.50px;font-size:7.6px;line-height:14px;color:#7a7a7a;left:252.80px">a</span>
<span class="t" id="t85" style="top:8.30px;font-size:10.5px;line-height:14px;color:#6a6a6a;left:268.40px;-webkit-text-stroke:.35px #fff">A</span>
<svg class="a" style="left:275px;top:6.5px" width="6" height="8" viewBox="0 0 6 8"><path d="M1 2.500a2 2 0 010 3M2.500 1.300a4 4 0 010 5.400" fill="none" stroke="#808080" stroke-width=".7"/></svg>
<svg class="a" style="left:288.500px;top:8px" width="13" height="13" viewBox="0 0 13 13"><path d="M6.500 1l1.700 3.600 3.800.5-2.800 2.700.7 3.900-3.400-1.900-3.400 1.900.7-3.900L1 5.100l3.800-.5z" fill="none" stroke="#5a5a5a" stroke-width=".9" stroke-linejoin="round"/></svg>
<svg class="a" style="left:318px;top:7.5px" width="15" height="14" viewBox="0 0 15 14"><path d="M6 1.500l1.500 3.200 3.400.4-2.500 2.400.6 3.500L6 9.300l-3 1.700.6-3.500L1.100 5.100l3.400-.4z" fill="none" stroke="#333" stroke-width="1" stroke-linejoin="round"/><path d="M10.500 7.500h3.500M10.500 9.800h3.500M9.500 12h4.500" stroke="#333" stroke-width="1"/></svg>
<svg class="a" style="left:342.500px;top:6.5px" width="17" height="17" viewBox="0 0 17 17"><circle cx="8" cy="9.200" r="7.400" fill="#d6d6d6"/><circle cx="8" cy="7.200" r="2.800" fill="#8e8e8e"/><path d="M3 14.200a5.200 5.200 0 0110 0 7.300 7.300 0 01-10 0z" fill="#8e8e8e"/><rect x="11.600" y="1.600" width="3.800" height="3.800" rx="1" fill="#d21f34"/></svg>
<svg class="a" style="left:369.500px;top:12.3px" width="13" height="4" viewBox="0 0 13 4"><circle cx="2" cy="2" r="1" fill="#333"/><circle cx="6.500" cy="2" r="1" fill="#333"/><circle cx="11" cy="2" r="1" fill="#333"/></svg>
<svg class="a" style="left:394.500px;top:6.8px" width="16.500" height="16.500" viewBox="0 0 16 16"><defs><linearGradient id="cpa" x1="0" y1="0" x2="1" y2="1"><stop offset="0" stop-color="#1f8fe8"/><stop offset=".45" stop-color="#5a6cf0"/><stop offset=".75" stop-color="#c050d8"/><stop offset="1" stop-color="#f0508a"/></linearGradient><linearGradient id="cpb" x1="1" y1="1" x2="0" y2="0"><stop offset="0" stop-color="#f5a030"/><stop offset=".45" stop-color="#e8c030"/><stop offset=".75" stop-color="#50c860"/><stop offset="1" stop-color="#20b0c8"/></linearGradient></defs><path d="M4.600 .8h6.200c1.500 0 2.500.8 3 2.200l1.700 5.200c.6 1.800-.5 3.600-2.400 3.600H9.800L7.600 4.200C7.200 2.900 6.200 .8 4.600 .8z" fill="url(#cpa)"/><path d="M11.400 15.200H5.200c-1.500 0-2.500-.8-3-2.200L.5 7.800C-.1 6 1 4.200 2.900 4.200h3.300l2.200 7.600c.4 1.300 1.400 3.400 3 3.400z" fill="url(#cpb)"/><path d="M4.600 .8C3 .8 2.300 2 2.700 3.400L2.900 4.200h3.300l1.400 0C7.200 2.900 6.200 .8 4.600 .8z" fill="#2a9df0"/><path d="M11.400 15.200c1.600 0 2.300-1.200 1.900-2.600l-.2-.8H9.800l-1.400 0c.4 1.300 1.400 3.400 3 3.400z" fill="#f08a40"/></svg>
</div>
<div class="epage">
<span class="t" id="t86" style="top:3.40px;font-size:40.5px;line-height:50px;color:#2ccfe3;left:61.90px;transform:scaleX(0.9305);transform-origin:0 50%;-webkit-text-stroke:.55px #1a1a1a">Battery</span>
<span class="t" id="t87" style="top:3.40px;font-size:40.5px;line-height:50px;color:#2ccfe3;left:190.60px;transform:scaleX(0.9885);transform-origin:0 50%;-webkit-text-stroke:.55px #1a1a1a">report</span>
<span class="t" id="t88" style="top:82.60px;font-size:10.1px;line-height:14px;color:#dedede;font-weight:bold;left:65.00px;transform:scaleX(0.9258);transform-origin:0 50%;-webkit-text-stroke:.4px #1a1a1a">COMPUTER NAME</span>
<span class="t" id="t89" style="top:82.20px;font-size:10.7px;line-height:14px;color:#ebebeb;left:209.80px;transform:scaleX(0.9579);transform-origin:0 50%;-webkit-text-stroke:.25px #1a1a1a">DESKTOP-2025644</span>
<span class="t" id="t90" style="top:107.70px;font-size:10.1px;line-height:14px;color:#dedede;font-weight:bold;left:65.00px;transform:scaleX(0.9105);transform-origin:0 50%;-webkit-text-stroke:.4px #1a1a1a">SYSTEM PRODUCT NAME</span>
<span class="t" id="t91" style="top:99.80px;font-size:10.7px;line-height:14px;color:#ebebeb;left:209.80px;transform:scaleX(0.9392);transform-origin:0 50%;-webkit-text-stroke:.25px #1a1a1a">FUJITSU CLIENT COMPUTING</span>
<span class="t" id="t92" style="top:115.30px;font-size:10.7px;line-height:14px;color:#ebebeb;left:209.80px;transform:scaleX(0.9701);transform-origin:0 50%;-webkit-text-stroke:.25px #1a1a1a">LIMITED FMVU32025</span>
<span class="t" id="t93" style="top:132.70px;font-size:10.1px;line-height:14px;color:#dedede;font-weight:bold;left:65.00px;transform:scaleX(0.8709);transform-origin:0 50%;-webkit-text-stroke:.4px #1a1a1a">BIOS</span>
<span class="t" id="t94" style="top:132.30px;font-size:10.7px;line-height:14px;color:#ebebeb;left:209.80px;-webkit-text-stroke:.25px #1a1a1a">Version 2.12 06/19/2020</span>
<span class="t" id="t95" style="top:158.20px;font-size:10.1px;line-height:14px;color:#dedede;font-weight:bold;left:65.00px;transform:scaleX(0.9060);transform-origin:0 50%;-webkit-text-stroke:.4px #1a1a1a">OS BUILD</span>
<span class="t" id="t96" style="top:151.60px;font-size:10.7px;line-height:14px;color:#ebebeb;left:209.80px;transform:scaleX(0.9756);transform-origin:0 50%;-webkit-text-stroke:.25px #1a1a1a">26100.1.amd64fre.ge_release.240331-</span>
<span class="t" id="t97" style="top:165.50px;font-size:10.7px;line-height:14px;color:#ebebeb;left:209.80px;transform:scaleX(0.9041);transform-origin:0 50%;-webkit-text-stroke:.25px #1a1a1a">1435</span>
<span class="t" id="t98" style="top:183.70px;font-size:10.1px;line-height:14px;color:#dedede;font-weight:bold;left:65.00px;transform:scaleX(0.8866);transform-origin:0 50%;-webkit-text-stroke:.4px #1a1a1a">PLATFORM ROLE</span>
<span class="t" id="t99" style="top:183.20px;font-size:10.7px;line-height:14px;color:#ebebeb;left:209.80px;transform:scaleX(1.0354);transform-origin:0 50%;-webkit-text-stroke:.25px #1a1a1a">Mobile</span>
<span class="t" id="t100" style="top:200.80px;font-size:10.1px;line-height:14px;color:#dedede;font-weight:bold;left:65.00px;transform:scaleX(0.8974);transform-origin:0 50%;-webkit-text-stroke:.4px #1a1a1a">CONNECTED STANDBY</span>
<span class="t" id="t101" style="top:201.00px;font-size:10.7px;line-height:14px;color:#ebebeb;left:209.80px;transform:scaleX(1.0605);transform-origin:0 50%;-webkit-text-stroke:.25px #1a1a1a">Not supported</span>
<span class="t" id="t102" style="top:218.70px;font-size:10.1px;line-height:14px;color:#dedede;font-weight:bold;left:65.00px;transform:scaleX(0.8944);transform-origin:0 50%;-webkit-text-stroke:.4px #1a1a1a">REPORT TIME</span>
<span class="t" id="t103" style="top:218.60px;font-size:10.4px;line-height:14px;color:#f2f2f2;font-weight:bold;left:209.80px;transform:scaleX(1.0911);transform-origin:0 50%;-webkit-text-stroke:.3px #1a1a1a">2025-12-08</span>
<span class="t" id="t104" style="top:218.60px;font-size:10.4px;line-height:14px;color:#f2f2f2;font-weight:bold;left:276.80px;transform:scaleX(0.9929);transform-origin:0 50%;-webkit-text-stroke:.3px #1a1a1a">14:41:12</span>
<span class="t" id="t105" style="top:302.00px;font-size:15.3px;line-height:20px;color:#2acbdc;left:61.00px;transform:scaleX(1.0258);transform-origin:0 50%;-webkit-text-stroke:.3px #2acbdc">Installed batteries</span>
<span class="t" id="t106" style="top:321.80px;font-size:11.2px;line-height:14px;color:#6c6c6c;left:61.00px;transform:scaleX(1.0065);transform-origin:0 50%;-webkit-text-stroke:.35px #1a1a1a">Information about each currently installed battery</span>
<span class="t" id="t107" style="top:348.80px;font-size:10.1px;line-height:14px;color:#dedede;font-weight:bold;left:235.00px;transform:scaleX(0.8580);transform-origin:0 50%;-webkit-text-stroke:.4px #1a1a1a">BATTERY 1</span>
<span class="t" id="t108" style="top:365.90px;font-size:10.1px;line-height:14px;color:#dedede;font-weight:bold;left:65.00px;transform:scaleX(0.9652);transform-origin:0 50%;-webkit-text-stroke:.4px #1a1a1a">NAME</span>
<span class="t" id="t109" style="top:365.40px;font-size:10.7px;line-height:14px;color:#ebebeb;left:235.70px;-webkit-text-stroke:.25px #1a1a1a">CP788304-02</span>
<span class="t" id="t110" style="top:383.80px;font-size:10.1px;line-height:14px;color:#dedede;font-weight:bold;left:65.00px;transform:scaleX(0.9069);transform-origin:0 50%;-webkit-text-stroke:.4px #1a1a1a">MANUFACTURER</span>
<span class="t" id="t111" style="top:383.30px;font-size:10.7px;line-height:14px;color:#ebebeb;left:235.70px;transform:scaleX(0.9719);transform-origin:0 50%;-webkit-text-stroke:.25px #1a1a1a">Fujitsu</span>
<span class="t" id="t112" style="top:400.90px;font-size:10.1px;line-height:14px;color:#dedede;font-weight:bold;left:65.00px;transform:scaleX(0.8935);transform-origin:0 50%;-webkit-text-stroke:.4px #1a1a1a">SERIAL NUMBER</span>
<span class="t" id="t113" style="top:400.60px;font-size:10.7px;line-height:14px;color:#ebebeb;left:235.70px;transform:scaleX(0.9722);transform-origin:0 50%;-webkit-text-stroke:.25px #1a1a1a">01A-Z201215006605Z</span>
<span class="t" id="t114" style="top:418.80px;font-size:10.1px;line-height:14px;color:#dedede;font-weight:bold;left:65.00px;transform:scaleX(0.8971);transform-origin:0 50%;-webkit-text-stroke:.4px #1a1a1a">CHEMISTRY</span>
<span class="t" id="t115" style="top:418.40px;font-size:10.7px;line-height:14px;color:#ebebeb;left:235.70px;-webkit-text-stroke:.25px #1a1a1a">LION</span>
<span class="t" id="t116" style="top:436.80px;font-size:10.1px;line-height:14px;color:#dedede;font-weight:bold;left:65.00px;transform:scaleX(0.8987);transform-origin:0 50%;-webkit-text-stroke:.4px #1a1a1a">DESIGN CAPACITY</span>
<span class="t" id="t117" style="top:436.30px;font-size:10.7px;line-height:14px;color:#ebebeb;left:235.70px;transform:scaleX(1.0183);transform-origin:0 50%;-webkit-text-stroke:.25px #1a1a1a">50,256 mWh</span>
<span class="t" id="t118" style="top:459.80px;font-size:10.1px;line-height:14px;color:#dedede;font-weight:bold;left:65.00px;transform:scaleX(0.8800);transform-origin:0 50%;-webkit-text-stroke:.4px #1a1a1a">FULL CHARGE CAPACITY</span>
<span class="t" id="t119" style="top:459.30px;font-size:10.7px;line-height:14px;color:#ebebeb;left:235.70px;transform:scaleX(0.9902);transform-origin:0 50%;-webkit-text-stroke:.25px #1a1a1a">43,315 mWh</span>
<span class="t" id="t120" style="top:477.30px;font-size:10.1px;line-height:14px;color:#dedede;font-weight:bold;left:65.00px;transform:scaleX(0.8751);transform-origin:0 50%;-webkit-text-stroke:.4px #1a1a1a">CYCLE COUNT</span>
<span class="t" id="t121" style="top:477.00px;font-size:10.7px;line-height:14px;color:#ebebeb;left:235.70px;transform:scaleX(1.0092);transform-origin:0 50%;-webkit-text-stroke:.25px #1a1a1a">76</span>
</div>
<div class="evs"><svg class="a" style="left:1.800px;top:3.800px" width="7" height="5" viewBox="0 0 7 5"><path d="M3.500 .5l3 4h-6z" fill="#8a8a8a"/></svg><i class="a" style="left:2.400px;top:16.700px;width:5.600px;height:77.500px;background:#8b8b8b;border-radius:3px"></i><svg class="a" style="left:1.800px;top:492.500px" width="7" height="5" viewBox="0 0 7 5"><path d="M3.500 4.500l3-4h-6z" fill="#8a8a8a"/></svg></div>
<div class="ehs"><svg class="a" style="left:2.100px;top:1px" width="5" height="7" viewBox="0 0 5 7"><path d="M.5 3.500l4-3v6z" fill="#8a8a8a"/></svg><i class="a" style="left:11.500px;top:1.900px;width:226px;height:5px;background:#8b8b8b;border-radius:3px"></i><svg class="a" style="left:392px;top:1px" width="5" height="7" viewBox="0 0 5 7"><path d="M4.500 3.500l-4-3v6z" fill="#8a8a8a"/></svg></div>
<div class="eborder"></div>
</div>
<div id="set">
<svg class="a" style="left:11.7px;top:13.500px" width="10" height="9" viewBox="0 0 10 9"><path d="M9.500 4.500H1M4.500 .8L.8 4.500l3.700 3.700" fill="none" stroke="#333" stroke-width="1"/></svg>
<svg class="a" style="left:39.5px;top:14px" width="11" height="9" viewBox="0 0 11 9"><path d="M.5 1h10M.5 4.500h10M.5 8h10" stroke="#333" stroke-width=".9"/></svg>
<span class="t" id="t122" style="top:11.00px;font-size:8.1px;line-height:14px;color:#111;left:69.40px;transform:scaleX(0.9504);transform-origin:0 50%">設定</span>
<svg class="a" style="left:138.5px;top:12px" width="11" height="11" viewBox="0 0 11 11"><circle cx="4.300" cy="4.300" r="3.300" fill="none" stroke="#333" stroke-width="1"/><path d="M6.800 6.800l3.400 3.400" stroke="#333" stroke-width="1.100"/></svg>
<svg class="a" style="left:284.2px;top:6px" width="10" height="10" viewBox="0 0 10 10"><path d="M1 5h8.500" stroke="#8e8e8e" stroke-width=".9"/></svg>
<svg class="a" style="left:316.0px;top:6px" width="10" height="10" viewBox="0 0 10 10"><rect x="2" y="2" width="6.200" height="6.200" fill="none" stroke="#9a9a9a" stroke-width=".9"/></svg>
<svg class="a" style="left:348.0px;top:6px" width="10" height="10" viewBox="0 0 10 10"><path d="M1.500 1.500l7 7M8.500 1.500l-7 7" stroke="#a5a5a5" stroke-width="1"/></svg>
<span class="t" id="t123" style="top:34.00px;font-size:16.2px;line-height:22px;color:#606060;font-weight:bold;left:18.00px;font-feature-settings:'palt'">システム</span>
<svg class="a" style="left:92.0px;top:41px" width="6" height="9" viewBox="0 0 6 9"><path d="M1.200 1l3.500 3.500L1.200 8" fill="none" stroke="#555" stroke-width="1.200"/></svg>
<span class="t" id="t124" style="top:34.00px;font-size:16.2px;line-height:22px;color:#1a1a1a;font-weight:bold;left:110.70px;transform:scaleX(1.0383);transform-origin:0 50%;font-feature-settings:'palt'">バージョン情報</span>
<div class="card" style="left:19.0px;top:70.3px;width:139.3px;height:106.9px"></div>
<div class="card" style="left:168.1px;top:70.3px;width:139.2px;height:106.9px"></div>
<div class="card" style="left:19.0px;top:186.6px;width:139.3px;height:107.3px"></div>
<div class="card" style="left:168.1px;top:186.6px;width:139.2px;height:107.3px"></div>
<svg class="a" style="left:30.2px;top:81px" width="8" height="9" viewBox="0 0 8 9"><rect x=".8" y=".8" width="6.400" height="7.400" fill="none" stroke="#555" stroke-width=".9"/><path d="M2.200 6.200l3-3" stroke="#555" stroke-width=".9"/></svg>
<span class="t" id="t125" style="top:78.30px;font-size:9.3px;line-height:14px;color:#707070;left:44.30px;transform:scaleX(0.7180);transform-origin:0 50%;font-feature-settings:'palt'">ストレージ</span>
<span class="t" id="t126" style="top:98.40px;font-size:11px;line-height:14px;color:#1a1a1a;font-weight:bold;left:30.40px;transform:scaleX(0.8710);transform-origin:0 50%">119 GB</span>
<span class="t" id="t127" style="top:154.10px;font-size:7.8px;line-height:14px;color:#707070;left:30.40px;transform:scaleX(1.0775);transform-origin:0 50%;font-feature-settings:'palt'">使用領域</span><span class="t" id="t128" style="top:153.90px;font-size:8.6px;line-height:14px;color:#707070;left:66.53px;transform:scaleX(0.9308);transform-origin:0 50%">32 GB / 119 GB</span>
<svg class="a" style="left:178.5px;top:81.500px" width="10" height="8" viewBox="0 0 10 8"><rect x=".6" y=".8" width="7.500" height="5.500" fill="none" stroke="#555" stroke-width=".9"/><path d="M2 7.300h6M8.200 3h1.500v3" stroke="#555" stroke-width=".9" fill="none"/></svg>
<span class="t" id="t129" style="top:78.30px;font-size:9.3px;line-height:14px;color:#707070;left:193.20px;transform:scaleX(0.7362);transform-origin:0 50%;font-feature-settings:'palt'">グラフィックス</span><span class="t" id="t130" style="top:78.30px;font-size:9.3px;line-height:14px;color:#707070;left:236.34px;transform:scaleX(0.7263);transform-origin:0 50%;font-feature-settings:'palt'">カード</span>
<span class="t" id="t131" style="top:98.40px;font-size:11px;line-height:14px;color:#1a1a1a;font-weight:bold;left:179.70px;transform:scaleX(0.9603);transform-origin:0 50%">128 MB</span>
<span class="t" id="t132" style="top:153.70px;font-size:8.2px;line-height:14px;color:#707070;left:179.70px;transform:scaleX(0.9828);transform-origin:0 50%">Intel(R) UHD Graphics</span>
<svg class="a" style="left:29.5px;top:198.500px" width="9" height="7" viewBox="0 0 9 7"><rect x=".5" y=".8" width="8" height="4" fill="#666"/><path d="M1.500 4.800v1.500M3.500 4.800v1.500M5.500 4.800v1.500M7.500 4.800v1.500" stroke="#666" stroke-width=".8"/></svg>
<span class="t" id="t133" style="top:195.40px;font-size:7.8px;line-height:14px;color:#707070;left:44.30px;transform:scaleX(1.0747);transform-origin:0 50%;font-feature-settings:'palt'">実装</span><span class="t" id="t134" style="top:195.20px;font-size:8.6px;line-height:14px;color:#707070;left:63.57px;transform:scaleX(0.9277);transform-origin:0 50%">RAM</span>
<span class="t" id="t135" style="top:214.90px;font-size:11px;line-height:14px;color:#1a1a1a;font-weight:bold;left:30.50px;transform:scaleX(0.9446);transform-origin:0 50%">8.00 GB</span>
<span class="t" id="t136" style="top:271.40px;font-size:7.8px;line-height:14px;color:#707070;left:30.50px;transform:scaleX(1.0990);transform-origin:0 50%;font-feature-settings:'palt'">速度</span><span class="t" id="t137" style="top:271.20px;font-size:8.6px;line-height:14px;color:#707070;left:47.64px;transform:scaleX(0.9493);transform-origin:0 50%">: 2133 MT/</span><span class="t" id="t138" style="top:271.40px;font-size:7.8px;line-height:14px;color:#707070;left:86.63px;transform:scaleX(1.0990);transform-origin:0 50%;font-feature-settings:'palt'">秒</span>
<svg class="a" style="left:178.3px;top:198px" width="9" height="9" viewBox="0 0 9 9"><rect x=".8" y=".8" width="7.400" height="7.400" rx="1" fill="none" stroke="#555" stroke-width=".9"/><rect x="3" y="3" width="3" height="3" fill="none" stroke="#555" stroke-width=".8"/></svg>
<span class="t" id="t139" style="top:195.00px;font-size:9.3px;line-height:14px;color:#707070;left:193.10px;transform:scaleX(0.7330);transform-origin:0 50%;font-feature-settings:'palt'">プロセッサ</span>
<span class="t" id="t140" style="top:214.90px;font-size:11px;line-height:14px;color:#1a1a1a;font-weight:bold;left:179.30px;transform:scaleX(0.9852);transform-origin:0 50%">Intel(R) Core(TM)</span>
<span class="t" id="t141" style="top:230.80px;font-size:11px;line-height:14px;color:#1a1a1a;font-weight:bold;left:179.30px;transform:scaleX(0.9537);transform-origin:0 50%">i5-10310U CPU @</span>
<span class="t" id="t142" style="top:246.40px;font-size:11px;line-height:14px;color:#1a1a1a;font-weight:bold;left:179.30px;transform:scaleX(0.9488);transform-origin:0 50%">1.70GHz</span>
<span class="t" id="t143" style="top:271.00px;font-size:8.2px;line-height:14px;color:#707070;left:179.30px;transform:scaleX(0.9510);transform-origin:0 50%">2.21 GHz</span>
<div class="card" style="left:19.0px;top:333.4px;width:332.0px;height:45.4px"></div>
<span class="t" id="t144" style="top:345.90px;font-size:10px;line-height:14px;color:#1a1a1a;left:30.50px;transform:scaleX(0.9106);transform-origin:0 50%">DESKTOP-2025644QA</span>
<span class="t" id="t145" style="top:358.10px;font-size:8.8px;line-height:14px;color:#707070;left:30.50px;transform:scaleX(0.9111);transform-origin:0 50%">FMVU32025</span>
<div class="btn" style="left:236.4px;top:346.500px;width:102.800px;height:21.800px"></div>
<span class="t" id="t146" style="top:350.70px;font-size:10px;line-height:14px;color:#1a1a1a;left:244.00px;transform:scaleX(0.8147);transform-origin:0 50%;font-feature-settings:'palt'">この</span><span class="t" id="t147" style="top:350.70px;font-size:10px;line-height:14px;color:#1a1a1a;left:261.85px;transform:scaleX(0.9112);transform-origin:0 50%">PC</span><span class="t" id="t148" style="top:350.70px;font-size:10px;line-height:14px;color:#1a1a1a;left:277.46px;transform:scaleX(0.7732);transform-origin:0 50%;font-feature-settings:'palt'">の</span><span class="t" id="t149" style="top:350.70px;font-size:10px;line-height:14px;color:#1a1a1a;left:284.92px;transform:scaleX(0.9807);transform-origin:0 50%;font-feature-settings:'palt'">名前</span><span class="t" id="t150" style="top:350.70px;font-size:10px;line-height:14px;color:#1a1a1a;left:304.53px;transform:scaleX(0.8072);transform-origin:0 50%;font-feature-settings:'palt'">を</span><span class="t" id="t151" style="top:350.70px;font-size:10px;line-height:14px;color:#1a1a1a;left:311.99px;transform:scaleX(0.9807);transform-origin:0 50%;font-feature-settings:'palt'">変更</span>
<div class="card" style="left:18.7px;top:384.400px;width:332.500px;height:200px;border-radius:6px 6px 0 0"></div>
<i class="a" style="left:19.0px;top:430.500px;width:331px;height:1px;background:#e6e6e6"></i>
<svg class="a" style="left:31.4px;top:402.100px" width="13" height="13" viewBox="0 0 13 13"><circle cx="6.500" cy="6.500" r="5.600" fill="none" stroke="#333" stroke-width=".9"/><path d="M6.500 5.600v3.700" stroke="#333" stroke-width="1"/><circle cx="6.500" cy="3.800" r=".7" fill="#333"/></svg>
<span class="t" id="t152" style="top:402.50px;font-size:9.8px;line-height:14px;color:#1a1a1a;left:59.70px;transform:scaleX(0.8097);transform-origin:0 50%;font-feature-settings:'palt'">デバイスの</span><span class="t" id="t153" style="top:402.50px;font-size:9.8px;line-height:14px;color:#1a1a1a;left:96.15px;transform:scaleX(1.0692);transform-origin:0 50%;font-feature-settings:'palt'">仕様</span>
<div class="btn" style="left:252.9px;top:398.100px;width:66.400px;height:20.700px"></div>
<span class="t" id="t154" style="top:402.00px;font-size:9.8px;line-height:14px;color:#1a1a1a;left:276.30px;transform:scaleX(0.7230);transform-origin:0 50%;font-feature-settings:'palt'">コピー</span>
<svg class="a" style="left:329.2px;top:405px" width="9" height="6" viewBox="0 0 9 6"><path d="M1 5l3.500-3.700L8 5" fill="none" stroke="#444" stroke-width="1"/></svg>
<span class="t" id="t155" style="top:439.30px;font-size:10.1px;line-height:14px;color:#1a1a1a;left:59.70px;transform:scaleX(0.7799);transform-origin:0 50%;font-feature-settings:'palt'">デバイス</span><span class="t" id="t156" style="top:439.30px;font-size:10.1px;line-height:14px;color:#1a1a1a;left:88.29px;transform:scaleX(1.0413);transform-origin:0 50%;font-feature-settings:'palt'">名</span>
<span class="t" id="t157" style="top:439.30px;font-size:10px;line-height:14px;color:#666;left:137.40px;transform:scaleX(0.9163);transform-origin:0 50%">DESKTOP-2025644QA</span>
<span class="t" id="t158" style="top:456.80px;font-size:10.1px;line-height:14px;color:#1a1a1a;left:59.70px;transform:scaleX(0.7943);transform-origin:0 50%;font-feature-settings:'palt'">プロセッサ</span>
<span class="t" id="t159" style="top:456.80px;font-size:10px;line-height:14px;color:#666;left:137.40px;transform:scaleX(0.9349);transform-origin:0 50%">Intel(R) Core(TM) i5-10310U CPU @</span>
<span class="t" id="t160" style="top:470.10px;font-size:10px;line-height:14px;color:#666;left:137.40px;transform:scaleX(0.9105);transform-origin:0 50%">1.70GHz (2.21 GHz)</span>
<span class="t" id="t161" style="top:487.60px;font-size:10.1px;line-height:14px;color:#1a1a1a;left:59.70px;font-feature-settings:'palt'">実装</span><span class="t" id="t162" style="top:487.60px;font-size:10px;line-height:14px;color:#1a1a1a;left:82.83px;transform:scaleX(0.9253);transform-origin:0 50%">RAM</span>
<span class="t" id="t163" style="top:487.60px;font-size:10px;line-height:14px;color:#666;left:137.40px;transform:scaleX(0.8978);transform-origin:0 50%">8.00 GB (7.65 GB</span><span class="t" id="t164" style="top:487.60px;font-size:10.1px;line-height:14px;color:#666;left:211.70px;transform:scaleX(0.9662);transform-origin:0 50%;font-feature-settings:'palt'">使用可能</span><span class="t" id="t165" style="top:487.60px;font-size:10px;line-height:14px;color:#666;left:250.71px;transform:scaleX(0.8942);transform-origin:0 50%">)</span>
<span class="t" id="t166" style="top:505.60px;font-size:10.1px;line-height:14px;color:#1a1a1a;left:59.70px;transform:scaleX(0.8021);transform-origin:0 50%;font-feature-settings:'palt'">デバイス</span><span class="t" id="t167" style="top:505.60px;font-size:10px;line-height:14px;color:#1a1a1a;left:92.35px;transform:scaleX(0.9954);transform-origin:0 50%">ID</span>
<span class="t" id="t168" style="top:505.60px;font-size:10px;line-height:14px;color:#666;left:137.40px;transform:scaleX(0.9182);transform-origin:0 50%">70CEB5D5-335E-42E9-</span>
<span class="t" id="t169" style="top:518.50px;font-size:10px;line-height:14px;color:#666;left:137.40px;transform:scaleX(0.9242);transform-origin:0 50%">B96E-9BDF83D0A329</span>
<span class="t" id="t170" style="top:537.40px;font-size:10.1px;line-height:14px;color:#1a1a1a;left:59.70px;transform:scaleX(0.7816);transform-origin:0 50%;font-feature-settings:'palt'">プロダクト</span><span class="t" id="t171" style="top:537.40px;font-size:10px;line-height:14px;color:#1a1a1a;left:98.13px;transform:scaleX(0.9565);transform-origin:0 50%">ID</span>
<span class="t" id="t172" style="top:537.40px;font-size:10px;line-height:14px;color:#666;left:137.40px;transform:scaleX(0.9573);transform-origin:0 50%">00330-53316-90406-AAOEM</span>
<span class="t" id="t173" style="top:555.10px;font-size:10.1px;line-height:14px;color:#1a1a1a;left:59.70px;transform:scaleX(0.8006);transform-origin:0 50%;font-feature-settings:'palt'">システムの</span><span class="t" id="t174" style="top:555.10px;font-size:10.1px;line-height:14px;color:#1a1a1a;left:96.91px;transform:scaleX(1.0594);transform-origin:0 50%;font-feature-settings:'palt'">種類</span>
<span class="t" id="t175" style="top:555.10px;font-size:10px;line-height:14px;color:#666;left:137.40px;transform:scaleX(0.9822);transform-origin:0 50%">64</span><span class="t" id="t176" style="top:555.10px;font-size:10.1px;line-height:14px;color:#666;left:151.53px;transform:scaleX(0.8205);transform-origin:0 50%;font-feature-settings:'palt'">ビット</span><span class="t" id="t177" style="top:555.10px;font-size:10.1px;line-height:14px;color:#666;left:175.22px;transform:scaleX(0.7789);transform-origin:0 50%;font-feature-settings:'palt'">オペレーティング</span><span class="t" id="t178" style="top:555.10px;font-size:10.1px;line-height:14px;color:#666;left:235.18px;transform:scaleX(0.8220);transform-origin:0 50%;font-feature-settings:'palt'">システム、</span><span class="t" id="t179" style="top:555.10px;font-size:10px;line-height:14px;color:#666;left:269.54px;transform:scaleX(0.9823);transform-origin:0 50%">x64</span><span class="t" id="t180" style="top:555.10px;font-size:10.1px;line-height:14px;color:#666;left:288.58px;transform:scaleX(0.7559);transform-origin:0 50%;font-feature-settings:'palt'">ベース</span><span class="t" id="t181" style="top:555.10px;font-size:10.1px;line-height:14px;color:#666;left:313.54px;transform:scaleX(0.7804);transform-origin:0 50%;font-feature-settings:'palt'">プ</span>
<span class="t" id="t182" style="top:567.80px;font-size:10.1px;line-height:14px;color:#666;left:137.40px;transform:scaleX(0.7854);transform-origin:0 50%;font-feature-settings:'palt'">ロセッサ</span>
<div class="sborder"></div>
</div>
<div id="tb">
<svg class="a" style="left:345.200px;top:9.1px" width="16.500" height="16.500" viewBox="0 0 16 16"><defs><linearGradient id="wl" x1="0" y1="0" x2="1" y2="1"><stop offset="0" stop-color="#4cc2f5"/><stop offset="1" stop-color="#0a6fd6"/></linearGradient></defs><rect x="0" y="0" width="7.500" height="7.500" rx=".6" fill="url(#wl)"/><rect x="8.500" y="0" width="7.500" height="7.500" rx=".6" fill="url(#wl)"/><rect x="0" y="8.500" width="7.500" height="7.500" rx=".6" fill="url(#wl)"/><rect x="8.500" y="8.500" width="7.500" height="7.500" rx=".6" fill="url(#wl)"/></svg>
<div class="pill"></div>
<svg class="a" style="left:378.500px;top:11.8px" width="11" height="11" viewBox="0 0 11 11"><circle cx="4.500" cy="4.500" r="3.500" fill="none" stroke="#333" stroke-width="1.200"/><path d="M7.200 7.200l3 3" stroke="#333" stroke-width="1.300"/></svg>
<span class="t" id="t183" style="top:10.70px;font-size:9.3px;line-height:14px;color:#757575;left:397.30px;transform:scaleX(1.0317);transform-origin:0 50%">検索</span>
<svg class="a" style="left:487px;top:7.8px" width="37" height="18" viewBox="0 0 37 18"><path d="M1.500 12.500L21 4.500" stroke="#9aa4b0" stroke-width="4.200" stroke-linecap="round"/><path d="M1.500 12.500L21 4.500" stroke="#f1f4f8" stroke-width="3" stroke-linecap="round"/><path d="M7 9.500l1-3.500 1.500 2.500M11.500 7.800l.8-3.600 1.700 2.600M16 6l.6-3.400 1.600 2.400" stroke="#2b3440" stroke-width="1.500" fill="none" stroke-linecap="round"/><path d="M23.500 15.500c0-5 2.300-10 5.800-10s6 5 6 10z" fill="#2f86d8"/><path d="M27.300 7.500c.6-1.300 1.300-2 2-2s1.500.7 2.100 2z" fill="#5aa8ec"/><path d="M23 15.200c2-1.800 10.500-1.800 12.500 0v1.300c-2 .9-10.500.9-12.500 0z" fill="#dbe9f6"/><path d="M23 15.600c2.500 1 10 1 12.500 0" stroke="#8fb4d8" stroke-width=".6" fill="none"/></svg>
<svg class="a" style="left:533px;top:10.3px" width="16" height="14" viewBox="0 0 16 14"><rect x=".5" y="1.500" width="12" height="12" rx="1.200" fill="#1c1c1c"/><rect x="4.500" y=".5" width="11" height="9.500" rx="1" fill="#ececec" stroke="#d0d0d0" stroke-width=".5"/></svg>
<svg class="a" style="left:564.500px;top:8.7px" width="18" height="17" viewBox="0 0 18 17"><defs><linearGradient id="m1" x1="0" y1="0" x2="1" y2="1"><stop offset="0" stop-color="#5a7cf5"/><stop offset=".5" stop-color="#a050e8"/><stop offset="1" stop-color="#f050a8"/></linearGradient><linearGradient id="m2" x1="0" y1="0" x2="1" y2="1"><stop offset="0" stop-color="#2a9cf0"/><stop offset=".5" stop-color="#38c890"/><stop offset="1" stop-color="#e8d040"/></linearGradient></defs><path d="M5 .8h6.400c1.600 0 2.700.9 3.200 2.400l1.800 5.400c.6 1.900-.5 3.800-2.600 3.800h-3.200L8.200 4.400C7.800 3 6.700 .8 5 .8z" fill="url(#m1)"/><path d="M12 16H5.600c-1.600 0-2.700-.9-3.200-2.400L.6 8.200C0 6.300 1.100 4.400 3.200 4.400h3.600L9 12c.4 1.400 1.300 4 3 4z" fill="url(#m2)"/><path d="M5 .8C3.300 .8 2.500 2.100 2.900 3.600l.3.800h3.600l1.400 0C7.800 3 6.700 .8 5 .8z" fill="#3aa0f5"/><rect x="6" y="11.800" width="12" height="5" rx="1.200" fill="#1a1a1a"/></svg>
<span class="t" id="t184" style="top:16.10px;font-size:3.8px;line-height:14px;color:#fff;font-weight:bold;left:572.30px;transform:scaleX(0.9895);transform-origin:0 50%">M365</span>
<svg class="a" style="left:596.500px;top:9.8px" width="17" height="15" viewBox="0 0 17 15"><path d="M.5 2.500c0-.8.5-1.300 1.300-1.300h4.500l1.500 1.800h7.400c.8 0 1.300.5 1.300 1.300v2H.5z" fill="#e9a81c"/><rect x=".5" y="4" width="16" height="10.500" rx="1.200" fill="#fccf3e"/><rect x=".5" y="10.500" width="16" height="4" rx="1" fill="#3b8fe0"/><rect x="5.500" y="9.500" width="6" height="2" rx=".6" fill="#9fd0f8"/></svg>
<svg class="a" style="left:626.2px;top:9.1px" width="16.5" height="16.5" viewBox="0 0 32 32"><defs><linearGradient id="eatb" x1="0" y1=".7" x2="1" y2=".35"><stop offset="0" stop-color="#2a8ee8"/><stop offset=".4" stop-color="#2cb8dc"/><stop offset=".7" stop-color="#3fd0a8"/><stop offset="1" stop-color="#72de48"/></linearGradient><linearGradient id="ebtb" x1="0" y1="0" x2=".6" y2="1"><stop offset="0" stop-color="#2590e8"/><stop offset="1" stop-color="#0f58b4"/></linearGradient><linearGradient id="ectb" x1="0" y1="0" x2=".8" y2="1"><stop offset="0" stop-color="#1a6cc8"/><stop offset="1" stop-color="#0a3f90"/></linearGradient></defs><path d="M1.300 17.500C.8 8.500 7.500 1 16 1c8.500 0 15 6 15 13.500 0 4.200-3 7-7 7-2.800 0-4.800-1.200-4.800-2.800 0-1.500 1.300-2 1.300-4.200 0-3-3-5.800-7.200-5.800C7.800 8.700 2.500 12 1.300 17.500z" fill="url(#eatb)"/><path d="M1.300 17.500C2.200 12 7 9.300 12 9.300c2.500 0 4.500.8 5.500 1.900-3.500.3-6.300 3.300-6.300 7.300 0 4.300 3.600 7.600 8.600 7.600 3.200 0 6-.9 8.300-2.200C25.800 28 21.200 31 16 31 8 31 1.800 25 1.300 17.500z" fill="url(#ebtb)"/><path d="M9.800 10c-2.600 2-4 5-4 8.300 0 6 4.200 11.500 10.700 12.700 5 .2 9.500-2.700 11.600-7.100-2.300 1.300-5.100 2.200-8.300 2.200-5 0-8.600-3.300-8.600-7.600 0-4 2.800-7 6.300-7.300-1-1.100-3-1.900-5.500-1.900-.8 0-1.500.2-2.200.7z" fill="url(#ectb)" opacity=".92"/></svg>
<svg class="a" style="left:657px;top:9.1px" width="16.500" height="16.500" viewBox="0 0 16 16"><path d="M5 3.500V2.200C5 1.500 5.500 1 6.200 1h3.600c.7 0 1.200.5 1.200 1.200v1.300" fill="none" stroke="#2f7fd6" stroke-width="1.300"/><rect x=".3" y="3" width="15.400" height="12.700" rx="1.800" fill="#134a92"/><rect x="5" y="6.300" width="2.700" height="2.700" fill="#e8502a"/><rect x="8.300" y="6.300" width="2.700" height="2.700" fill="#8cc820"/><rect x="5" y="9.600" width="2.700" height="2.700" fill="#1aa8f0"/><rect x="8.300" y="9.600" width="2.700" height="2.700" fill="#ffc010"/></svg>
<svg class="a" style="left:688px;top:8.8px" width="17" height="17" viewBox="-8.500 -8.500 17 17"><g fill="#6f7780"><rect x="-1.700" y="-8.300" width="3.400" height="4" rx=".6" transform="rotate(0)"/><rect x="-1.700" y="-8.300" width="3.400" height="4" rx=".6" transform="rotate(45)"/><rect x="-1.700" y="-8.300" width="3.400" height="4" rx=".6" transform="rotate(90)"/><rect x="-1.700" y="-8.300" width="3.400" height="4" rx=".6" transform="rotate(135)"/><rect x="-1.700" y="-8.300" width="3.400" height="4" rx=".6" transform="rotate(180)"/><rect x="-1.700" y="-8.300" width="3.400" height="4" rx=".6" transform="rotate(225)"/><rect x="-1.700" y="-8.300" width="3.400" height="4" rx=".6" transform="rotate(270)"/><rect x="-1.700" y="-8.300" width="3.400" height="4" rx=".6" transform="rotate(315)"/></g><circle r="6.200" fill="#6f7780"/><circle r="4.300" fill="#aeb6bf"/><circle r="3" fill="#2f7fd6"/><circle r="1.500" fill="#dfe8f2"/></svg>
<svg class="a" style="left:719px;top:9.3px" width="17" height="16" viewBox="0 0 17 16"><rect x="6.500" y="2" width="8.500" height="9.500" fill="#b4b9c0"/><rect x="8" y="3.500" width="5.500" height="1.500" fill="#e6e9ec"/><rect x="8" y="6" width="5.500" height="1" fill="#8d939b"/><rect x="2" y="7.500" width="8" height="5.500" fill="#5a6068"/><rect x="3" y="8.500" width="6" height="3" fill="#b9cfe6"/><rect x="3.500" y="13.500" width="9" height="1.300" fill="#7a8088"/></svg>
<i class="a" style="left:633.1px;top:28.500px;width:3.600px;height:1.700px;border-radius:1px;background:#8a9098"></i>
<i class="a" style="left:694.7px;top:28.500px;width:3.600px;height:1.700px;border-radius:1px;background:#8a9098"></i>
<i class="a" style="left:725.7px;top:28.500px;width:3.600px;height:1.700px;border-radius:1px;background:#8a9098"></i>
<svg class="a" style="left:900.500px;top:14.5px" width="9" height="6" viewBox="0 0 9 6"><path d="M1 5l3.500-3.700L8 5" fill="none" stroke="#333" stroke-width="1.100"/></svg>
<svg class="a" style="left:920.500px;top:11.8px" width="13" height="11" viewBox="0 0 13 11"><rect x="1" y="2.500" width="7.500" height="6" rx="1" fill="none" stroke="#333" stroke-width="1"/><path d="M8.500 5l3-2v5l-3-2M1 1l10.500 9" stroke="#333" stroke-width="1" fill="none"/></svg>
<span class="t" id="t185" style="top:10.50px;font-size:15px;line-height:14px;color:#333;left:945.70px;transform:scaleX(0.8786);transform-origin:0 50%;-webkit-text-stroke:.45px #e3ebf6">A</span>
<svg class="a" style="left:965.500px;top:12.3px" width="13" height="10" viewBox="0 0 13 10"><path d="M1 3.500a8 8 0 0111 0M2.800 5.500a5.400 5.400 0 017.400 0M4.600 7.400a2.800 2.800 0 013.800 0" fill="none" stroke="#2c2c2c" stroke-width="1.350"/><circle cx="6.500" cy="8.800" r=".9" fill="#333"/></svg>
<svg class="a" style="left:983px;top:12.3px" width="12" height="10" viewBox="0 0 12 10"><path d="M1 3.500h2L6 1v8L3 6.500H1z" fill="none" stroke="#333" stroke-width=".9" stroke-linejoin="round"/><path d="M7.800 3a3 3 0 010 4M9.300 1.600a5 5 0 010 6.800" fill="none" stroke="#333" stroke-width=".9"/></svg>
<svg class="a" style="left:1000.500px;top:13.7px" width="12.500" height="7.200" viewBox="0 0 14 8"><rect x=".6" y=".6" width="11" height="6.800" rx="1.300" fill="none" stroke="#333" stroke-width="1"/><rect x="2" y="2" width="7" height="4" rx=".5" fill="#333"/><path d="M12.600 2.800v2.400" stroke="#333" stroke-width="1.200"/></svg>
<span class="t" id="t186" style="top:3.90px;font-size:8.6px;line-height:14px;color:#222;right:14.00px;transform:scaleX(0.9063);transform-origin:100% 50%">14:42</span>
<span class="t" id="t187" style="top:15.60px;font-size:8.6px;line-height:14px;color:#222;right:14.00px;transform:scaleX(0.9903);transform-origin:100% 50%">2025/12/08</span>
</div>
</div>
</body>
</html>
